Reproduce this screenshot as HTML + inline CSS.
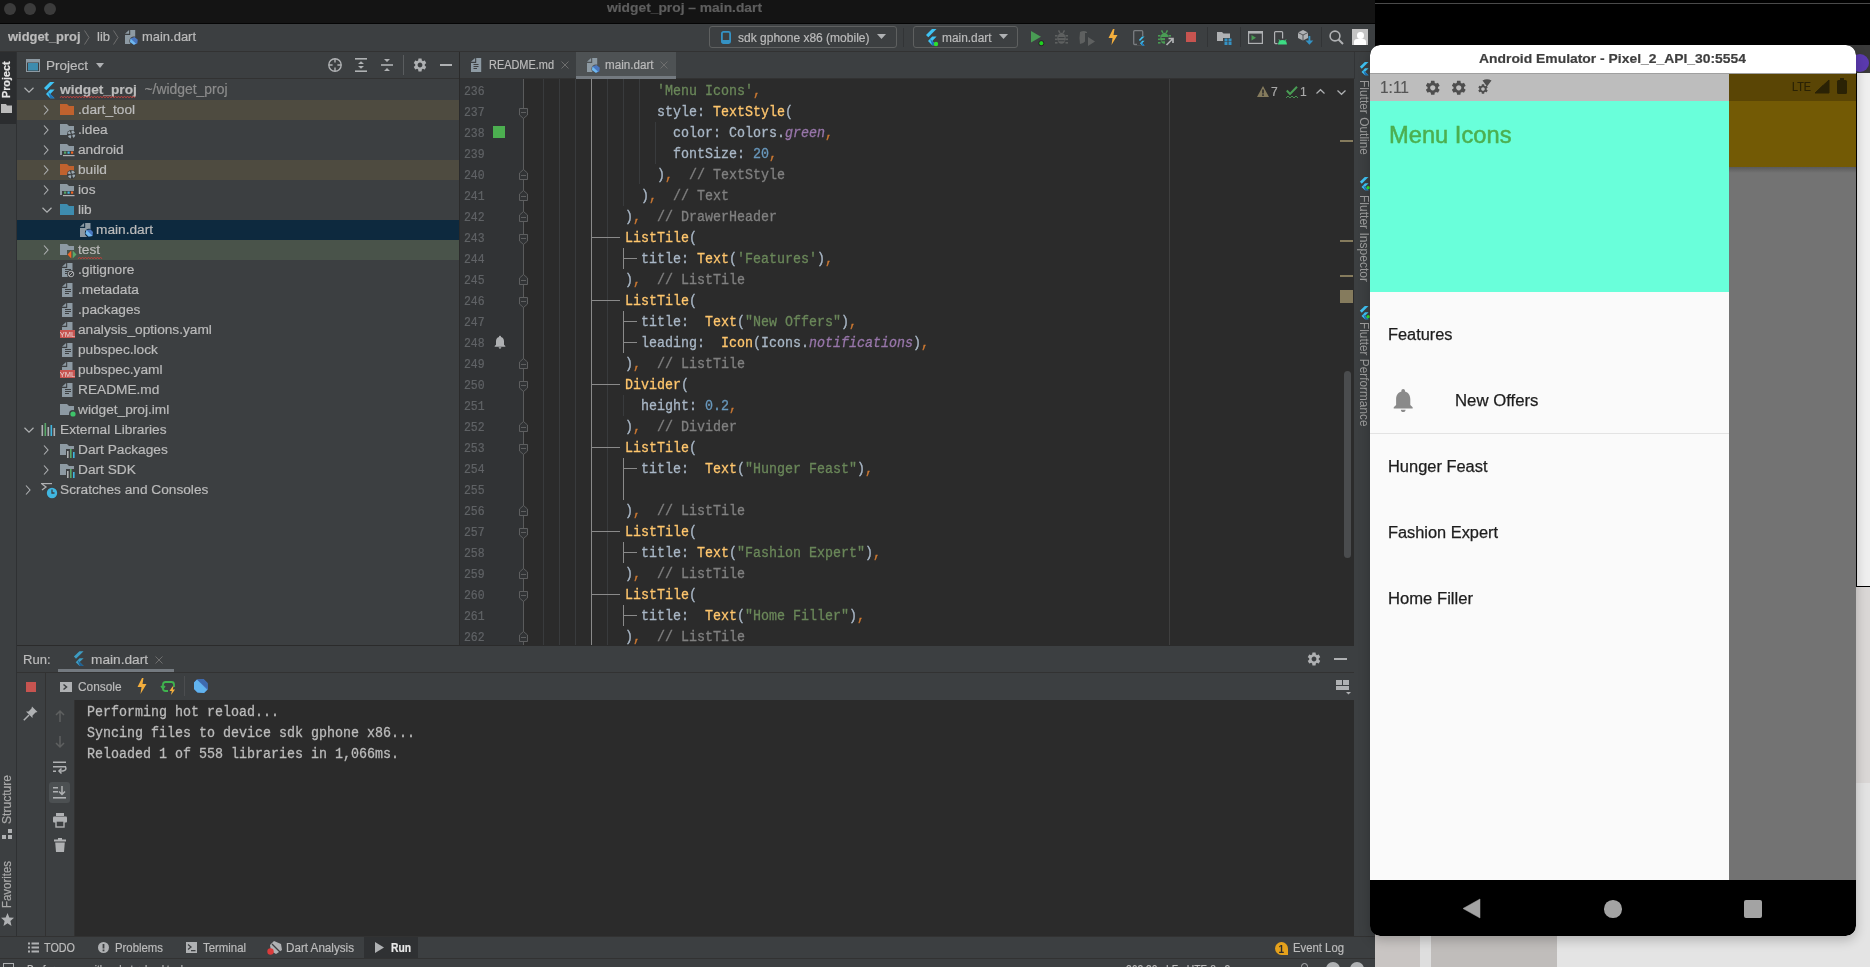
<!DOCTYPE html>
<html><head><meta charset="utf-8">
<style>
*{margin:0;padding:0;box-sizing:border-box}
html,body{width:1870px;height:967px;overflow:hidden;background:#000;font-family:"Liberation Sans",sans-serif;}
.a{position:absolute}
.t{position:absolute;white-space:pre;line-height:1;-webkit-text-stroke-width:0.2px}
.ui{font-size:13.6px;color:#BBBBBB}
.mono{font-family:"Liberation Mono",monospace}
svg{position:absolute;overflow:visible}
</style></head><body>
<div class="a" style="left:0;top:0;width:1375px;height:967px;background:#3C3F41;overflow:hidden;will-change:transform" id="ide">
  <!-- title bar -->
  <div class="a" style="left:0;top:0;width:1375px;height:23px;background:#141414"></div>
  <div class="a" style="left:0;top:23px;width:1375px;height:1px;background:#050505"></div>
  <div class="a" style="left:4px;top:3px;width:12px;height:12px;border-radius:50%;background:#3B3B3B"></div>
  <div class="a" style="left:24px;top:3px;width:12px;height:12px;border-radius:50%;background:#3B3B3B"></div>
  <div class="a" style="left:44px;top:3px;width:12px;height:12px;border-radius:50%;background:#3B3B3B"></div>
  

  <!-- nav bar -->
  <div class="a" style="left:0;top:24px;width:1375px;height:27px;background:#3C3F41"></div>
  <div class="a" style="left:0;top:51px;width:1375px;height:1px;background:#323232"></div>
  <!-- left stripe -->
  <div class="a" style="left:0;top:52px;width:16px;height:885px;background:#3C3F41"></div>
  <div class="a" style="left:16px;top:52px;width:1px;height:885px;background:#2F3133"></div>
  <!-- project header -->
  <div class="a" style="left:17px;top:52px;width:442px;height:26px;background:#3C3F41"></div>
  <div class="a" style="left:17px;top:78px;width:442px;height:1px;background:#323232"></div>
  <!-- tree -->
  <div class="a" style="left:17px;top:79px;width:442px;height:566px;background:#3C3F41" id="tree"></div>
  <div class="a" style="left:459px;top:52px;width:1px;height:594px;background:#2B2B2B"></div>
  <!-- editor -->
  <div class="a" style="left:460px;top:52px;width:894px;height:26px;background:#3C3F41" id="tabs"></div>
  <div class="a" style="left:460px;top:78px;width:894px;height:1px;background:#323232"></div>
  <div class="a" style="left:460px;top:79px;width:64px;height:566px;background:#313335" id="gutter"></div>
  <div class="a" style="left:524px;top:79px;width:830px;height:566px;background:#2B2B2B" id="code"></div>
  <!-- right stripe -->
  <div class="a" style="left:1354px;top:52px;width:21px;height:885px;background:#3C3F41"></div>
  <div class="a" style="left:1354px;top:52px;width:1px;height:27px;background:#323436"></div>
  <!-- run panel -->
  <div class="a" style="left:17px;top:645px;width:1337px;height:1px;background:#2B2B2B"></div>
  <div class="a" style="left:17px;top:646px;width:1337px;height:26px;background:#3C3F41"></div>
  <div class="a" style="left:17px;top:672px;width:1337px;height:1px;background:#323232"></div>
  <div class="a" style="left:17px;top:673px;width:1337px;height:27px;background:#3C3F41"></div>
  <div class="a" style="left:75px;top:700px;width:1279px;height:237px;background:#2B2B2B"></div>
  <div class="a" style="left:45px;top:673px;width:1px;height:264px;background:#323232"></div>
  <div class="a" style="left:74px;top:700px;width:1px;height:237px;background:#323232"></div>
  <!-- bottom bar -->
  <div class="a" style="left:0;top:936px;width:1375px;height:1px;background:#323232"></div>
  <div class="a" style="left:0;top:937px;width:1375px;height:22px;background:#3C3F41"></div>
  <div class="a" style="left:0;top:958px;width:1375px;height:1px;background:#323232"></div>
  <div class="a" style="left:0;top:959px;width:1375px;height:8px;background:#3C3F41"></div>
<div class="t" style="left:607.40px;top:1.47px;font-size:13.5px;color:#5E5E5E;font-weight:bold;transform:scaleX(1.0229);transform-origin:0 0;">widget_proj – main.dart</div>
<div class="t" style="left:8.30px;top:29.60px;font-size:13px;color:#BBBBBB;font-weight:bold;transform:scaleX(0.9939);transform-origin:0 0;">widget_proj</div>
<svg style="left:84px;top:30px" width="6" height="15" viewBox="0 0 6 15"><path d="M0.5 0.5 L5 7.5 L0.5 14.5" fill="none" stroke="#6E6E6E" stroke-width="1"/></svg>
<div class="t" style="left:96.50px;top:29.60px;font-size:13px;color:#BBBBBB;transform:scaleX(0.9995);transform-origin:0 0;">lib</div>
<svg style="left:113px;top:30px" width="6" height="15" viewBox="0 0 6 15"><path d="M0.5 0.5 L5 7.5 L0.5 14.5" fill="none" stroke="#6E6E6E" stroke-width="1"/></svg>
<svg style="left:125px;top:30px" width="13" height="15" viewBox="0 0 13 15"><path d="M5.2 0 H10.2 V14 H0 V5 H5.2 Z" fill="#8D9AA3"/><path d="M0 3.8 L4.1 0 V3.8 Z" fill="#8D9AA3"/><circle cx="9" cy="11" r="4.6" fill="#3C3F41"/><path d="M5.5 8.5 L9.5 7 L12.8 9.8 L12.3 13.5 L8.8 14.8 L5 12 Z" fill="#4A77C0"/><path d="M5.5 8.5 L11 13.8 L8.8 14.8 L5 12 Z" fill="#70B9EF"/></svg>
<div class="t" style="left:141.50px;top:29.60px;font-size:13px;color:#BBBBBB;transform:scaleX(0.9965);transform-origin:0 0;">main.dart</div>
<div class="a" style="left:709px;top:26px;width:188px;height:22px;border:1px solid #5E6060;border-radius:3px"></div>
<svg style="left:721px;top:31px" width="10" height="13" viewBox="0 0 10 13"><rect x="0.9" y="0.9" width="8.2" height="11.2" rx="1.5" fill="none" stroke="#3592C4" stroke-width="1.8"/><rect x="0.9" y="9" width="8.2" height="3" fill="#3592C4"/></svg>
<div class="t" style="left:738.00px;top:31.62px;font-size:12.5px;color:#BBBBBB;transform:scaleX(0.9606);transform-origin:0 0;">sdk gphone x86 (mobile)</div>
<svg style="left:877px;top:34px" width="9" height="5" viewBox="0 0 9 5"><path d="M0 0 H9 L4.5 5 Z" fill="#AFB1B3"/></svg>
<div class="a" style="left:903px;top:28px;width:1px;height:19px;background:#323436;"></div>
<div class="a" style="left:913px;top:26px;width:105px;height:22px;border:1px solid #5E6060;border-radius:3px"></div>
<svg style="left:925px;top:28.5px" width="12.0" height="17.0" viewBox="0 0 12.0 17.0"><g transform="scale(1.0)"><path d="M7 0 H11.5 L3.3 8.2 L1 5.9 Z" fill="#3FC3F4"/><path d="M7.2 7.6 H11.6 L7.3 11.9 L11.6 16.2 H7.2 L3 12 Z" fill="#3FC3F4"/><path d="M5.1 9.9 L7.3 12 L11.6 16.2 H7.2 Z" fill="#1F72B8"/></g><circle cx="11.0" cy="15.0" r="2.2" fill="#2EE02E"/></svg>
<div class="t" style="left:942.00px;top:31.62px;font-size:12.5px;color:#BBBBBB;transform:scaleX(0.9500);transform-origin:0 0;">main.dart</div>
<svg style="left:999px;top:34px" width="9" height="5" viewBox="0 0 9 5"><path d="M0 0 H9 L4.5 5 Z" fill="#AFB1B3"/></svg>
<svg style="left:1031px;top:31px" width="12" height="14" viewBox="0 0 12 14"><path d="M0 0 L10 5.8 L0 11.6 Z" fill="#499C54"/><circle cx="10.3" cy="12.2" r="2.1" fill="#1FD21F"/><circle cx="10.3" cy="12.2" r="2.6" fill="none" stroke="#1a1a1a" stroke-width="0.6"/></svg>
<svg style="left:1055px;top:30px" width="13" height="14" viewBox="0 0 13 14"><ellipse cx="6.5" cy="8.3" rx="4.2" ry="5.5" fill="#5E6060"/><rect x="0" y="5" width="2.5" height="1.6" fill="#5E6060"/><rect x="10.5" y="5" width="2.5" height="1.6" fill="#5E6060"/><rect x="0" y="8.5" width="2.5" height="1.6" fill="#5E6060"/><rect x="10.5" y="8.5" width="2.5" height="1.6" fill="#5E6060"/><rect x="0" y="12" width="2.5" height="1.6" fill="#5E6060"/><rect x="10.5" y="12" width="2.5" height="1.6" fill="#5E6060"/><path d="M3.5 0.3 L5 3 M9.5 0.3 L8 3" stroke="#5E6060" stroke-width="1.5"/><rect x="3.5" y="7" width="6" height="1.1" fill="#3C3F41"/><rect x="3.5" y="10.2" width="6" height="1.1" fill="#3C3F41"/></svg>
<svg style="left:1080px;top:31px" width="16" height="15" viewBox="0 0 16 15"><path d="M0 1 Q4 -1 7 1 L7 9 Q4 12 0 13 Q-1 6 0 1 Z" fill="#5E6060"/><rect x="5" y="2" width="3" height="10" fill="#3C3F41"/><path d="M8 6 L15 10.5 L8 15 Z" fill="#5E6060"/></svg>
<svg style="left:1108px;top:29px" width="10" height="16" viewBox="0 0 10 16"><path d="M5 0 L0.5 9 H4.5 L3.5 16 L9.5 6 H5.5 L6.5 0 Z" fill="#F4AF3D"/></svg>
<svg style="left:1133px;top:30px" width="12" height="16" viewBox="0 0 12 16"><rect x="0.7" y="0.7" width="9" height="13.8" rx="1" fill="none" stroke="#7A7D80" stroke-width="1.3"/><rect x="4" y="6" width="8" height="9" fill="#3C3F41"/><path d="M9 6.5 H11.5 L7 11 L5.9 9.9 Z" fill="#3FC3F4"/><path d="M9.2 10.8 H11.6 L9.3 13.1 L11.6 15.4 H9.2 L7 13.2 Z" fill="#3FC3F4"/><path d="M8.1 12.3 L9.3 13.1 L11.6 15.4 H9.2 Z" fill="#1F72B8"/></svg>
<svg style="left:1158px;top:30px" width="13" height="14" viewBox="0 0 13 14"><ellipse cx="6.5" cy="8.3" rx="4.2" ry="5.5" fill="#499C54"/><rect x="0" y="5" width="2.5" height="1.6" fill="#499C54"/><rect x="10.5" y="5" width="2.5" height="1.6" fill="#499C54"/><rect x="0" y="8.5" width="2.5" height="1.6" fill="#499C54"/><rect x="10.5" y="8.5" width="2.5" height="1.6" fill="#499C54"/><rect x="0" y="12" width="2.5" height="1.6" fill="#499C54"/><rect x="10.5" y="12" width="2.5" height="1.6" fill="#499C54"/><path d="M3.5 0.3 L5 3 M9.5 0.3 L8 3" stroke="#499C54" stroke-width="1.5"/><rect x="3.5" y="7" width="6" height="1.1" fill="#3C3F41"/><rect x="3.5" y="10.2" width="6" height="1.1" fill="#3C3F41"/></svg>
<svg style="left:1165px;top:37px" width="9" height="9" viewBox="0 0 9 9"><rect x="0" y="0" width="9" height="9" fill="#3C3F41"/><path d="M1.5 8 L7.5 2 M3.5 1.5 H8 V6" fill="none" stroke="#AFB1B3" stroke-width="1.7"/></svg>
<div class="a" style="left:1186px;top:32px;width:10px;height:10px;background:#C75450;"></div>
<div class="a" style="left:1207px;top:27px;width:1px;height:20px;background:#323436;"></div>
<svg style="left:1217px;top:32px" width="15" height="13" viewBox="0 0 15 13"><path d="M0 0 H5 L6.5 1.5 H13 V9 H0 Z" fill="#AFB1B3"/><rect x="6" y="6" width="9" height="7" fill="#3C3F41"/><rect x="7.5" y="6.5" width="3" height="3" fill="#3592C4"/><rect x="11.5" y="6.5" width="3" height="3" fill="#3592C4"/><rect x="7.5" y="10" width="3" height="3" fill="#3592C4"/><rect x="11.5" y="10" width="3" height="3" fill="#3592C4"/></svg>
<div class="a" style="left:1240px;top:27px;width:1px;height:20px;background:#323436;"></div>
<svg style="left:1248px;top:31px" width="15" height="13" viewBox="0 0 15 13"><rect x="0.6" y="0.6" width="13.8" height="11.8" fill="none" stroke="#AFB1B3" stroke-width="1.2"/><rect x="0.6" y="0.6" width="13.8" height="2" fill="#AFB1B3"/><path d="M3.5 4 L8 6.8 L3.5 9.6 Z" fill="#499C54"/></svg>
<svg style="left:1274px;top:31px" width="13" height="14" viewBox="0 0 13 14"><rect x="0.6" y="0.6" width="8" height="12" rx="1" fill="none" stroke="#AFB1B3" stroke-width="1.2"/><rect x="3.5" y="7.5" width="10" height="7" fill="#3C3F41"/><path d="M4 13.5 A4.5 4.5 0 0 1 13 13.5 Z" fill="#3DDC84"/><path d="M5 8.5 L6 10 M12 8.5 L11 10" stroke="#3DDC84" stroke-width="0.9"/></svg>
<svg style="left:1298px;top:30px" width="16" height="16" viewBox="0 0 16 16"><path d="M5 0 L10 2.5 V8 L5 10.5 L0 8 V2.5 Z" fill="#AFB1B3"/><path d="M0 2.5 L5 5 L10 2.5 M5 5 V10.5" fill="none" stroke="#3C3F41" stroke-width="0.8"/><rect x="10.5" y="6" width="1.8" height="6" fill="#3592C4"/><path d="M7.5 10.5 H15.3 L11.4 14.8 Z" fill="#3592C4"/></svg>
<div class="a" style="left:1321px;top:27px;width:1px;height:20px;background:#323436;"></div>
<svg style="left:1329px;top:30px" width="15" height="15" viewBox="0 0 15 15"><circle cx="6" cy="6" r="4.9" fill="none" stroke="#AFB1B3" stroke-width="1.6"/><path d="M9.5 9.5 L14 14" stroke="#AFB1B3" stroke-width="1.9"/></svg>
<div class="a" style="left:1352px;top:29px;width:16px;height:16px;background:#C4C4C4;overflow:hidden"><div class="a" style="left:4.5px;top:2.5px;width:7px;height:7.5px;border-radius:50%;background:#FFFFFF"></div><div class="a" style="left:2px;top:10px;width:12px;height:8px;border-radius:3px 3px 0 0;background:#FFFFFF"></div></div>
<svg style="left:26px;top:59px" width="14" height="14" viewBox="0 0 14 14"><rect x="0.5" y="0.5" width="13" height="12" fill="none" stroke="#8D9AA3" stroke-width="1"/><rect x="0.5" y="0.5" width="13" height="3" fill="#8D9AA3"/><rect x="2" y="4" width="10" height="7.5" fill="#3E8CAE"/></svg>
<div class="t" style="left:45.50px;top:58.74px;font-size:13.3px;color:#BBBBBB;transform:scaleX(1.0146);transform-origin:0 0;">Project</div>
<svg style="left:96px;top:63px" width="8" height="5" viewBox="0 0 8 5"><path d="M0 0 H8 L4 5 Z" fill="#AFB1B3"/></svg>
<svg style="left:328px;top:58px" width="14" height="14" viewBox="0 0 14 14"><circle cx="7" cy="7" r="6.2" fill="none" stroke="#AFB1B3" stroke-width="1.4"/><path d="M7 0.8 V4.6 M7 9.4 V13.2 M0.8 7 H4.6 M9.4 7 H13.2" stroke="#AFB1B3" stroke-width="1.4"/></svg>
<svg style="left:355px;top:58px" width="12" height="14" viewBox="0 0 12 14"><rect x="0" y="0" width="12" height="1.6" fill="#AFB1B3"/><rect x="0" y="12.4" width="12" height="1.6" fill="#AFB1B3"/><path d="M3 6 L6 3.2 L9 6 Z M3 8 L6 10.8 L9 8 Z" fill="#AFB1B3"/></svg>
<svg style="left:381px;top:59px" width="12" height="12" viewBox="0 0 12 12"><rect x="0" y="5.2" width="12" height="1.6" fill="#AFB1B3"/><path d="M3 0 H9 L6 3 Z M3 12 H9 L6 9 Z" fill="#AFB1B3"/></svg>
<div class="a" style="left:403px;top:55px;width:1px;height:20px;background:#5A5D5F;"></div>
<svg style="left:412px;top:57px" width="16" height="16" viewBox="0 0 24 24"><path fill="#AFB1B3" d="M19.14,12.94c0.04-0.3,0.06-0.61,0.06-0.94c0-0.32-0.02-0.64-0.07-0.94l2.03-1.58c0.18-0.14,0.23-0.41,0.12-0.61l-1.92-3.32c-0.12-0.22-0.37-0.29-0.59-0.22l-2.39,0.96c-0.5-0.38-1.03-0.7-1.62-0.94L14.4,2.81c-0.04-0.24-0.24-0.41-0.48-0.41h-3.84c-0.24,0-0.43,0.17-0.47,0.41L9.25,5.35C8.66,5.59,8.12,5.92,7.63,6.29L5.24,5.33c-0.22-0.08-0.47,0-0.59,0.22L2.74,8.87C2.62,9.08,2.66,9.34,2.86,9.48l2.03,1.58C4.84,11.36,4.8,11.69,4.8,12s0.02,0.64,0.07,0.94l-2.03,1.58c-0.18,0.14-0.23,0.41-0.12,0.61l1.92,3.32c0.12,0.22,0.37,0.29,0.59,0.22l2.39-0.96c0.5,0.38,1.03,0.7,1.62,0.94l0.36,2.54c0.05,0.24,0.24,0.41,0.48,0.41h3.84c0.24,0,0.44-0.17,0.47-0.41l0.36-2.54c0.59-0.24,1.13-0.56,1.62-0.94l2.39,0.96c0.22,0.08,0.47,0,0.59-0.22l1.92-3.32c0.12-0.22,0.07-0.47-0.12-0.61L19.14,12.94z M12,15.6c-1.98,0-3.6-1.62-3.6-3.6s1.62-3.6,3.6-3.6s3.6,1.62,3.6,3.6S13.98,15.6,12,15.6z"/></svg>
<div class="a" style="left:440px;top:64px;width:12px;height:1.6px;background:#AFB1B3;"></div>
<svg style="left:471px;top:58px" width="11" height="15" viewBox="0 0 11 15"><path d="M5.2 0 H10.2 V14 H0 V5 H5.2 Z" fill="#8D9AA3"/><path d="M0 3.8 L4.1 0 V3.8 Z" fill="#8D9AA3"/><rect x="2.5" y="6" width="5" height="1" fill="#3C3F41"/><rect x="2.5" y="8" width="5" height="1" fill="#3C3F41"/><rect x="2.5" y="10" width="3.5" height="1" fill="#3C3F41"/></svg>
<div class="t" style="left:488.50px;top:58.64px;font-size:12px;color:#BBBBBB;transform:scaleX(0.9110);transform-origin:0 0;">README.md</div>
<svg style="left:561px;top:61px" width="8" height="8" viewBox="0 0 8 8"><path d="M0.5 0.5 L7.5 7.5 M7.5 0.5 L0.5 7.5" stroke="#6E6E6E" stroke-width="1"/></svg>
<div class="a" style="left:576px;top:52px;width:100px;height:24px;background:#4E5254;"></div>
<div class="a" style="left:576px;top:76px;width:100px;height:3px;background:#747A80;"></div>
<svg style="left:587px;top:58px" width="13" height="15" viewBox="0 0 13 15"><path d="M5.2 0 H10.2 V14 H0 V5 H5.2 Z" fill="#8D9AA3"/><path d="M0 3.8 L4.1 0 V3.8 Z" fill="#8D9AA3"/><circle cx="9" cy="11" r="4.6" fill="#4E5254"/><path d="M5.5 8.5 L9.5 7 L12.8 9.8 L12.3 13.5 L8.8 14.8 L5 12 Z" fill="#4A77C0"/><path d="M5.5 8.5 L11 13.8 L8.8 14.8 L5 12 Z" fill="#70B9EF"/></svg>
<div class="t" style="left:604.50px;top:58.64px;font-size:12px;color:#BBBBBB;transform:scaleX(0.9696);transform-origin:0 0;">main.dart</div>
<svg style="left:660px;top:61px" width="8" height="8" viewBox="0 0 8 8"><path d="M0.5 0.5 L7.5 7.5 M7.5 0.5 L0.5 7.5" stroke="#6E6E6E" stroke-width="1"/></svg>
<div class="a" style="left:0px;top:52px;width:16px;height:72px;background:#2B2D2F;"></div>
<div class="t" style="left:1.2px;top:97.5px;font-size:11.3px;color:#E6E6E6;transform-origin:0 0;transform:rotate(-90deg) scaleX(0.9528);font-weight:bold;">Project</div>
<svg style="left:1px;top:104px" width="12" height="9" viewBox="0 0 12 9"><path d="M0 0 H5 L6 1.5 H11 V9 H0 Z" fill="#BBBBBB"/></svg>
<div class="t" style="left:0.6px;top:824px;font-size:12px;color:#A9A9A9;transform-origin:0 0;transform:rotate(-90deg) scaleX(1.0064);">Structure</div>
<svg style="left:2px;top:829px" width="11" height="11" viewBox="0 0 11 11"><rect x="0" y="6" width="4" height="4" fill="#AFB1B3"/><rect x="6" y="6" width="4" height="4" fill="#AFB1B3"/><rect x="6" y="0" width="4" height="4" fill="#AFB1B3"/></svg>
<div class="t" style="left:0.6px;top:908px;font-size:12px;color:#A9A9A9;transform-origin:0 0;transform:rotate(-90deg) scaleX(0.9524);">Favorites</div>
<svg style="left:1px;top:913px" width="13" height="13" viewBox="0 0 13 13"><path d="M6.5 0 L8.3 4.5 L13 4.8 L9.4 8 L10.5 13 L6.5 10.3 L2.5 13 L3.6 8 L0 4.8 L4.7 4.5 Z" fill="#AFB1B3"/></svg>
<svg style="left:1359px;top:62px" width="10" height="14" viewBox="0 0 12 17"><path d="M7 0 H11.5 L3.3 8.2 L1 5.9 Z" fill="#3FC3F4"/><path d="M7.2 7.6 H11.6 L7.3 11.9 L11.6 16.2 H7.2 L3 12 Z" fill="#3FC3F4"/><path d="M5.1 9.9 L7.3 12 L11.6 16.2 H7.2 Z" fill="#1F72B8"/></svg>
<div class="t" style="left:1369.6px;top:79.8px;font-size:12px;color:#9E9E9E;transform-origin:0 0;transform:rotate(90deg) scaleX(0.9952);-webkit-text-stroke-width:0;">Flutter Outline</div>
<svg style="left:1359px;top:177px" width="10" height="14" viewBox="0 0 12 17"><path d="M7 0 H11.5 L3.3 8.2 L1 5.9 Z" fill="#3FC3F4"/><path d="M7.2 7.6 H11.6 L7.3 11.9 L11.6 16.2 H7.2 L3 12 Z" fill="#3FC3F4"/><path d="M5.1 9.9 L7.3 12 L11.6 16.2 H7.2 Z" fill="#1F72B8"/><circle cx="11" cy="13" r="2" fill="#2EE02E"/></svg>
<div class="t" style="left:1369.6px;top:194.6px;font-size:12px;color:#9E9E9E;transform-origin:0 0;transform:rotate(90deg) scaleX(1.0034);-webkit-text-stroke-width:0;">Flutter Inspector</div>
<svg style="left:1359px;top:306px" width="10" height="14" viewBox="0 0 12 17"><path d="M7 0 H11.5 L3.3 8.2 L1 5.9 Z" fill="#3FC3F4"/><path d="M7.2 7.6 H11.6 L7.3 11.9 L11.6 16.2 H7.2 L3 12 Z" fill="#3FC3F4"/><path d="M5.1 9.9 L7.3 12 L11.6 16.2 H7.2 Z" fill="#1F72B8"/><circle cx="11" cy="13" r="2" fill="#2EE02E"/></svg>
<div class="t" style="left:1369.6px;top:321.5px;font-size:12px;color:#9E9E9E;transform-origin:0 0;transform:rotate(90deg) scaleX(0.9855);-webkit-text-stroke-width:0;">Flutter Performance</div>
<div class="a" style="left:17px;top:100px;width:442px;height:20px;background:#4E4B40;"></div>
<div class="a" style="left:17px;top:160px;width:442px;height:20px;background:#4E4B40;"></div>
<div class="a" style="left:17px;top:220px;width:442px;height:20px;background:#0D293E;"></div>
<div class="a" style="left:17px;top:240px;width:442px;height:20px;background:#49534A;"></div>
<svg style="left:24px;top:87px" width="10" height="6" viewBox="0 0 10 6"><path d="M0.5 0.8 L5 5.2 L9.5 0.8" fill="none" stroke="#AFB1B3" stroke-width="1.2"/></svg>
<svg style="left:43px;top:82px" width="12" height="17" viewBox="0 0 12 17"><path d="M7 0 H11.5 L3.3 8.2 L1 5.9 Z" fill="#3FC3F4"/><path d="M7.2 7.6 H11.6 L7.3 11.9 L11.6 16.2 H7.2 L3 12 Z" fill="#3FC3F4"/><path d="M5.1 9.9 L7.3 12 L11.6 16.2 H7.2 Z" fill="#1F72B8"/></svg>
<div class="t" style="left:60px;top:83.2px;font-size:13.7px;color:#BBBBBB;font-weight:bold">widget_proj</div>
<svg style="left:60px;top:96px" width="77" height="3" viewBox="0 0 77 3"><path d="M0 2 L1.5 0 L3 2 L4.5 0 L6 2 L7.5 0 L9 2 L10.5 0 L12 2 L13.5 0 L15 2 L16.5 0 L18 2 L19.5 0 L21 2 L22.5 0 L24 2 L25.5 0 L27 2 L28.5 0 L30 2 L31.5 0 L33 2 L34.5 0 L36 2 L37.5 0 L39 2 L40.5 0 L42 2 L43.5 0 L45 2 L46.5 0 L48 2 L49.5 0 L51 2 L52.5 0 L54 2 L55.5 0 L57 2 L58.5 0 L60 2 L61.5 0 L63 2 L64.5 0 L66 2 L67.5 0 L69 2 L70.5 0 L72 2 L73.5 0 L75 2" fill="none" stroke="#BC3F3C" stroke-width="0.9"/></svg>
<div class="t" style="left:144.5px;top:83.2px;font-size:13.9px;color:#8C8C8C;">~/widget_proj</div>
<svg style="left:43.4px;top:105px" width="6" height="10" viewBox="0 0 6 10"><path d="M1 0.5 L5 5 L1 9.5" fill="none" stroke="#AFB1B3" stroke-width="1.1"/></svg>
<svg style="left:60px;top:104px" width="14" height="11" viewBox="0 0 14 11"><path d="M0 0 H7 L9 2 H14 V11 H0 Z" fill="#C0622E"/></svg>
<div class="t" style="left:78px;top:103.4px;font-size:13.7px;color:#BBBBBB;">.dart_tool</div>
<svg style="left:43.4px;top:125px" width="6" height="10" viewBox="0 0 6 10"><path d="M1 0.5 L5 5 L1 9.5" fill="none" stroke="#AFB1B3" stroke-width="1.1"/></svg>
<svg style="left:60px;top:124px" width="14" height="11" viewBox="0 0 14 11"><path d="M0 0 H7 L9 2 H14 V11 H0 Z" fill="#8D9AA3"/></svg>
<svg style="left:67px;top:130px" width="9" height="9" viewBox="0 0 9 9"><circle cx="4.5" cy="4.5" r="4.5" fill="#3C3F41"/><g fill="#9AA7B0"><path d="M4.5 4.5 L4.5 0.5 A4 4 0 0 1 8 2.5 Z"/><path d="M4.5 4.5 L8.3 4.8 A4 4 0 0 1 6.5 8 Z"/><path d="M4.5 4.5 L3.8 8.4 A4 4 0 0 1 0.8 6 Z"/><path d="M4.5 4.5 L0.6 3.5 A4 4 0 0 1 2.5 1 Z"/></g><circle cx="4.5" cy="4.5" r="1.2" fill="#3C3F41"/></svg>
<div class="t" style="left:78px;top:123.4px;font-size:13.7px;color:#BBBBBB;">.idea</div>
<svg style="left:43.4px;top:145px" width="6" height="10" viewBox="0 0 6 10"><path d="M1 0.5 L5 5 L1 9.5" fill="none" stroke="#AFB1B3" stroke-width="1.1"/></svg>
<svg style="left:60px;top:144px" width="14" height="11" viewBox="0 0 14 11"><path d="M0 0 H7 L9 2 H14 V11 H0 Z" fill="#8D9AA3"/></svg>
<svg style="left:62px;top:151px" width="14" height="6" viewBox="0 0 14 6"><rect x="0" y="0" width="13" height="6" fill="#3C3F41"/><rect x="2" y="0.5" width="2.2" height="2.2" fill="#59A869"/><rect x="5.5" y="0.5" width="2.2" height="2.2" fill="#40B6E0"/><rect x="9" y="0.5" width="2.2" height="2.2" fill="#F26522"/><rect x="1" y="4" width="11.5" height="1.2" fill="#AFB1B3"/></svg>
<div class="t" style="left:78px;top:143.4px;font-size:13.7px;color:#BBBBBB;">android</div>
<svg style="left:43.4px;top:165px" width="6" height="10" viewBox="0 0 6 10"><path d="M1 0.5 L5 5 L1 9.5" fill="none" stroke="#AFB1B3" stroke-width="1.1"/></svg>
<svg style="left:60px;top:164px" width="14" height="11" viewBox="0 0 14 11"><path d="M0 0 H7 L9 2 H14 V11 H0 Z" fill="#C0622E"/></svg>
<svg style="left:67px;top:170px" width="9" height="9" viewBox="0 0 9 9"><circle cx="4.5" cy="4.5" r="4.5" fill="#3C3F41"/><g fill="#9AA7B0"><path d="M4.5 4.5 L4.5 0.5 A4 4 0 0 1 8 2.5 Z"/><path d="M4.5 4.5 L8.3 4.8 A4 4 0 0 1 6.5 8 Z"/><path d="M4.5 4.5 L3.8 8.4 A4 4 0 0 1 0.8 6 Z"/><path d="M4.5 4.5 L0.6 3.5 A4 4 0 0 1 2.5 1 Z"/></g><circle cx="4.5" cy="4.5" r="1.2" fill="#3C3F41"/></svg>
<div class="t" style="left:78px;top:163.4px;font-size:13.7px;color:#BBBBBB;">build</div>
<svg style="left:43.4px;top:185px" width="6" height="10" viewBox="0 0 6 10"><path d="M1 0.5 L5 5 L1 9.5" fill="none" stroke="#AFB1B3" stroke-width="1.1"/></svg>
<svg style="left:60px;top:184px" width="14" height="11" viewBox="0 0 14 11"><path d="M0 0 H7 L9 2 H14 V11 H0 Z" fill="#8D9AA3"/></svg>
<svg style="left:62px;top:191px" width="14" height="6" viewBox="0 0 14 6"><rect x="0" y="0" width="13" height="6" fill="#3C3F41"/><rect x="2" y="0.5" width="2.2" height="2.2" fill="#59A869"/><rect x="5.5" y="0.5" width="2.2" height="2.2" fill="#40B6E0"/><rect x="9" y="0.5" width="2.2" height="2.2" fill="#F26522"/><rect x="1" y="4" width="11.5" height="1.2" fill="#AFB1B3"/></svg>
<div class="t" style="left:78px;top:183.4px;font-size:13.7px;color:#BBBBBB;">ios</div>
<svg style="left:42px;top:207px" width="10" height="6" viewBox="0 0 10 6"><path d="M0.5 0.8 L5 5.2 L9.5 0.8" fill="none" stroke="#AFB1B3" stroke-width="1.2"/></svg>
<svg style="left:60px;top:204px" width="14" height="11" viewBox="0 0 14 11"><path d="M0 0 H7 L9 2 H14 V11 H0 Z" fill="#3E8CAE"/></svg>
<div class="t" style="left:78px;top:203.4px;font-size:13.7px;color:#BBBBBB;">lib</div>
<svg style="left:80px;top:223px" width="12" height="14" viewBox="0 0 12 14"><path d="M5.2 0 H10.5 V14 H0 V5 H5.2 Z" fill="#8D9AA3"/><path d="M0 3.8 L4.1 0 V3.8 Z" fill="#8D9AA3"/></svg>
<svg style="left:85px;top:229px" width="8" height="8" viewBox="0 0 8 8"><circle cx="4" cy="4" r="4.2" fill="#0D293E"/><path d="M1.5 1 L5.5 0.5 L8 3 L7.5 7 L3.5 7.5 L0.5 4.5 Z" fill="#4A77C0"/><path d="M1.5 1 L6.5 6 L7.5 7 L3.5 7.5 L0.5 4.5 Z" fill="#70B9EF"/></svg>
<div class="t" style="left:96px;top:223.4px;font-size:13.7px;color:#BBBBBB;">main.dart</div>
<svg style="left:43.4px;top:245px" width="6" height="10" viewBox="0 0 6 10"><path d="M1 0.5 L5 5 L1 9.5" fill="none" stroke="#AFB1B3" stroke-width="1.1"/></svg>
<svg style="left:60px;top:244px" width="14" height="11" viewBox="0 0 14 11"><path d="M0 0 H7 L9 2 H14 V11 H0 Z" fill="#8D9AA3"/></svg>
<svg style="left:67px;top:250px" width="10" height="9" viewBox="0 0 10 9"><rect x="0" y="0" width="10" height="9" fill="#49534A"/><path d="M4.3 0.5 L0.5 4.5 L4.3 8.5 Z" fill="#F26522"/><path d="M5.7 0.5 L9.5 4.5 L5.7 8.5 Z" fill="#59A869"/></svg>
<div class="t" style="left:78px;top:243.4px;font-size:13.7px;color:#BBBBBB;">test</div>
<svg style="left:78px;top:257px" width="25" height="3" viewBox="0 0 25 3"><path d="M0 2 L1.5 0 L3 2 L4.5 0 L6 2 L7.5 0 L9 2 L10.5 0 L12 2 L13.5 0 L15 2 L16.5 0 L18 2 L19.5 0 L21 2 L22.5 0 L24 2" fill="none" stroke="#BC3F3C" stroke-width="0.9"/></svg>
<svg style="left:62px;top:263px" width="12" height="14" viewBox="0 0 12 14"><path d="M5.2 0 H10.5 V14 H0 V5 H5.2 Z" fill="#8D9AA3"/><path d="M0 3.8 L4.1 0 V3.8 Z" fill="#8D9AA3"/><rect x="3" y="6" width="6" height="1" fill="#3C3F41"/><rect x="3" y="8" width="6" height="1" fill="#3C3F41"/><rect x="3" y="10" width="4" height="1" fill="#3C3F41"/></svg>
<svg style="left:67px;top:270px" width="8" height="8" viewBox="0 0 8 8"><circle cx="4" cy="4" r="4" fill="#3C3F41"/><circle cx="4" cy="4" r="2.8" fill="none" stroke="#AFB1B3" stroke-width="1"/><path d="M2 6 L6 2" stroke="#AFB1B3" stroke-width="1"/></svg>
<div class="t" style="left:78px;top:263.4px;font-size:13.7px;color:#BBBBBB;">.gitignore</div>
<svg style="left:62px;top:283px" width="12" height="14" viewBox="0 0 12 14"><path d="M5.2 0 H10.5 V14 H0 V5 H5.2 Z" fill="#8D9AA3"/><path d="M0 3.8 L4.1 0 V3.8 Z" fill="#8D9AA3"/><rect x="3" y="6" width="6" height="1" fill="#3C3F41"/><rect x="3" y="8" width="6" height="1" fill="#3C3F41"/><rect x="3" y="10" width="4" height="1" fill="#3C3F41"/></svg>
<div class="t" style="left:78px;top:283.4px;font-size:13.7px;color:#BBBBBB;">.metadata</div>
<svg style="left:62px;top:303px" width="12" height="14" viewBox="0 0 12 14"><path d="M5.2 0 H10.5 V14 H0 V5 H5.2 Z" fill="#8D9AA3"/><path d="M0 3.8 L4.1 0 V3.8 Z" fill="#8D9AA3"/><rect x="3" y="6" width="6" height="1" fill="#3C3F41"/><rect x="3" y="8" width="6" height="1" fill="#3C3F41"/><rect x="3" y="10" width="4" height="1" fill="#3C3F41"/></svg>
<div class="t" style="left:78px;top:303.4px;font-size:13.7px;color:#BBBBBB;">.packages</div>
<svg style="left:62px;top:322px" width="12" height="9" viewBox="0 0 12 9"><path d="M5.2 0 H10.5 V9 H0 V5 H5.2 Z" fill="#8D9AA3"/><path d="M0 3.8 L4.1 0 V3.8 Z" fill="#8D9AA3"/></svg>
<svg style="left:60px;top:330px" width="15" height="8" viewBox="0 0 15 8"><rect x="0" y="0" width="15" height="8" fill="#C75450"/><text x="7.5" y="7" text-anchor="middle" font-family="Liberation Sans" font-size="7.5" fill="#E8D8D8">YML</text></svg>
<div class="t" style="left:78px;top:323.4px;font-size:13.7px;color:#BBBBBB;">analysis_options.yaml</div>
<svg style="left:62px;top:343px" width="12" height="14" viewBox="0 0 12 14"><path d="M5.2 0 H10.5 V14 H0 V5 H5.2 Z" fill="#8D9AA3"/><path d="M0 3.8 L4.1 0 V3.8 Z" fill="#8D9AA3"/><rect x="3" y="6" width="6" height="1" fill="#3C3F41"/><rect x="3" y="8" width="6" height="1" fill="#3C3F41"/><rect x="3" y="10" width="4" height="1" fill="#3C3F41"/></svg>
<div class="t" style="left:78px;top:343.4px;font-size:13.7px;color:#BBBBBB;">pubspec.lock</div>
<svg style="left:62px;top:362px" width="12" height="9" viewBox="0 0 12 9"><path d="M5.2 0 H10.5 V9 H0 V5 H5.2 Z" fill="#8D9AA3"/><path d="M0 3.8 L4.1 0 V3.8 Z" fill="#8D9AA3"/></svg>
<svg style="left:60px;top:370px" width="15" height="8" viewBox="0 0 15 8"><rect x="0" y="0" width="15" height="8" fill="#C75450"/><text x="7.5" y="7" text-anchor="middle" font-family="Liberation Sans" font-size="7.5" fill="#E8D8D8">YML</text></svg>
<div class="t" style="left:78px;top:363.4px;font-size:13.7px;color:#BBBBBB;">pubspec.yaml</div>
<svg style="left:62px;top:383px" width="12" height="14" viewBox="0 0 12 14"><path d="M5.2 0 H10.5 V14 H0 V5 H5.2 Z" fill="#8D9AA3"/><path d="M0 3.8 L4.1 0 V3.8 Z" fill="#8D9AA3"/><rect x="3" y="6" width="6" height="1" fill="#3C3F41"/><rect x="3" y="8" width="6" height="1" fill="#3C3F41"/><rect x="3" y="10" width="4" height="1" fill="#3C3F41"/></svg>
<div class="t" style="left:78px;top:383.4px;font-size:13.7px;color:#BBBBBB;">README.md</div>
<svg style="left:60px;top:404px" width="14" height="11" viewBox="0 0 14 11"><path d="M0 0 H7 L9 2 H14 V11 H0 Z" fill="#8D9AA3"/></svg>
<svg style="left:69px;top:410px" width="8" height="8" viewBox="0 0 8 8"><circle cx="4" cy="4" r="4" fill="#3C3F41"/><circle cx="4" cy="4" r="2.6" fill="#3EC46A"/></svg>
<div class="t" style="left:78px;top:403.4px;font-size:13.7px;color:#BBBBBB;">widget_proj.iml</div>
<svg style="left:24px;top:427px" width="10" height="6" viewBox="0 0 10 6"><path d="M0.5 0.8 L5 5.2 L9.5 0.8" fill="none" stroke="#AFB1B3" stroke-width="1.2"/></svg>
<svg style="left:41px;top:423px" width="16" height="14" viewBox="0 0 16 14"><rect x="0.5" y="2" width="1.6" height="11" fill="#AFB1B3"/><rect x="3.5" y="0" width="1.6" height="13" fill="#59A869"/><rect x="6.5" y="4" width="1.6" height="9" fill="#AFB1B3"/><rect x="9.5" y="2" width="1.6" height="11" fill="#40B6E0"/><rect x="12.5" y="5" width="1.6" height="8" fill="#AFB1B3"/></svg>
<div class="t" style="left:60px;top:423.4px;font-size:13.7px;color:#BBBBBB;">External Libraries</div>
<svg style="left:43.4px;top:445px" width="6" height="10" viewBox="0 0 6 10"><path d="M1 0.5 L5 5 L1 9.5" fill="none" stroke="#AFB1B3" stroke-width="1.1"/></svg>
<svg style="left:60px;top:444px" width="14" height="11" viewBox="0 0 14 11"><path d="M0 0 H7 L9 2 H14 V11 H0 Z" fill="#8D9AA3"/></svg>
<svg style="left:66px;top:449px" width="10" height="9" viewBox="0 0 10 9"><rect x="0" y="0" width="10" height="9" fill="#3C3F41"/><rect x="1" y="2" width="1.6" height="7" fill="#AFB1B3"/><rect x="4" y="0" width="1.6" height="9" fill="#59A869"/><rect x="7" y="3" width="1.6" height="6" fill="#40B6E0"/></svg>
<div class="t" style="left:78px;top:443.4px;font-size:13.7px;color:#BBBBBB;">Dart Packages</div>
<svg style="left:43.4px;top:465px" width="6" height="10" viewBox="0 0 6 10"><path d="M1 0.5 L5 5 L1 9.5" fill="none" stroke="#AFB1B3" stroke-width="1.1"/></svg>
<svg style="left:60px;top:464px" width="14" height="11" viewBox="0 0 14 11"><path d="M0 0 H7 L9 2 H14 V11 H0 Z" fill="#8D9AA3"/></svg>
<svg style="left:66px;top:469px" width="10" height="9" viewBox="0 0 10 9"><rect x="0" y="0" width="10" height="9" fill="#3C3F41"/><rect x="1" y="2" width="1.6" height="7" fill="#AFB1B3"/><rect x="4" y="0" width="1.6" height="9" fill="#59A869"/><rect x="7" y="3" width="1.6" height="6" fill="#40B6E0"/></svg>
<div class="t" style="left:78px;top:463.4px;font-size:13.7px;color:#BBBBBB;">Dart SDK</div>
<svg style="left:25.4px;top:485px" width="6" height="10" viewBox="0 0 6 10"><path d="M1 0.5 L5 5 L1 9.5" fill="none" stroke="#AFB1B3" stroke-width="1.1"/></svg>
<svg style="left:41px;top:483px" width="12" height="11" viewBox="0 0 12 11"><path d="M0 0 H12 V11 H0 Z" fill="#9AA7B0" opacity="0"/><path d="M1 1 L5 4 L1 7" fill="none" stroke="#AFB1B3" stroke-width="1.3"/><rect x="0" y="0" width="11" height="1.2" fill="#AFB1B3"/></svg>
<svg style="left:46px;top:487px" width="12" height="12" viewBox="0 0 12 12"><circle cx="6" cy="6" r="6" fill="#3C3F41"/><circle cx="6" cy="6" r="5.2" fill="#40B6E0"/><path d="M6 2.5 V6 H8.5" fill="none" stroke="#3C3F41" stroke-width="1.3"/></svg>
<div class="t" style="left:60px;top:483.4px;font-size:13.7px;color:#BBBBBB;">Scratches and Consoles</div>
<!--TABS-->
<div class="a" style="left:524px;top:79px;width:830px;height:566px;overflow:hidden">
<div class="a" style="left:645px;top:0px;width:1px;height:566px;background:#3F3F3F;"></div>
<div class="a" style="left:19px;top:0px;width:1px;height:566px;background:#393B3D;"></div>
<div class="a" style="left:35px;top:0px;width:1px;height:566px;background:#393B3D;"></div>
<div class="a" style="left:51px;top:0px;width:1px;height:566px;background:#393B3D;"></div>
<div class="a" style="left:83px;top:0px;width:1px;height:566px;background:#393B3D;"></div>
<div class="a" style="left:67px;top:0px;width:1px;height:566px;background:#8A8A8A;"></div>
<div class="a" style="left:99px;top:0px;width:1px;height:127px;background:#393B3D;"></div>
<div class="a" style="left:115px;top:0px;width:1px;height:105px;background:#393B3D;"></div>
<div class="a" style="left:131px;top:43px;width:1px;height:42px;background:#393B3D;"></div>
<div class="a" style="left:68px;top:158px;width:28px;height:1px;background:#8A8A8A;"></div>
<div class="a" style="left:68px;top:221px;width:28px;height:1px;background:#8A8A8A;"></div>
<div class="a" style="left:68px;top:305px;width:28px;height:1px;background:#8A8A8A;"></div>
<div class="a" style="left:68px;top:368px;width:28px;height:1px;background:#8A8A8A;"></div>
<div class="a" style="left:68px;top:452px;width:28px;height:1px;background:#8A8A8A;"></div>
<div class="a" style="left:68px;top:515px;width:28px;height:1px;background:#8A8A8A;"></div>
<div class="a" style="left:99px;top:168.5px;width:1px;height:21px;background:#8A8A8A;"></div>
<div class="a" style="left:100px;top:179px;width:13px;height:1px;background:#8A8A8A;"></div>
<div class="a" style="left:99px;top:231.5px;width:1px;height:42px;background:#8A8A8A;"></div>
<div class="a" style="left:100px;top:242px;width:13px;height:1px;background:#8A8A8A;"></div>
<div class="a" style="left:100px;top:263px;width:13px;height:1px;background:#8A8A8A;"></div>
<div class="a" style="left:99px;top:315.5px;width:1px;height:21px;background:#393B3D;"></div>
<div class="a" style="left:99px;top:378.5px;width:1px;height:42px;background:#8A8A8A;"></div>
<div class="a" style="left:100px;top:389px;width:13px;height:1px;background:#8A8A8A;"></div>
<div class="a" style="left:99px;top:462.5px;width:1px;height:21px;background:#8A8A8A;"></div>
<div class="a" style="left:100px;top:473px;width:13px;height:1px;background:#8A8A8A;"></div>
<div class="a" style="left:99px;top:525.5px;width:1px;height:21px;background:#8A8A8A;"></div>
<div class="a" style="left:100px;top:536px;width:13px;height:1px;background:#8A8A8A;"></div>
<div class="t" style="left:133.00px;top:5.49px;font-family:'Liberation Mono',monospace;font-size:14.5px;transform:scaleX(0.9195);transform-origin:0 0;-webkit-text-stroke-width:0.3px"><span style="color:#6A8759;">'Menu Icons'</span><span style="color:#CC7832;">,</span></div>
<div class="t" style="left:133.00px;top:26.49px;font-family:'Liberation Mono',monospace;font-size:14.5px;transform:scaleX(0.9195);transform-origin:0 0;-webkit-text-stroke-width:0.3px"><span style="color:#A9B7C6;">style: </span><span style="color:#FFC66D;">TextStyle</span><span style="color:#A9B7C6;">(</span></div>
<div class="t" style="left:149.00px;top:47.49px;font-family:'Liberation Mono',monospace;font-size:14.5px;transform:scaleX(0.9195);transform-origin:0 0;-webkit-text-stroke-width:0.3px"><span style="color:#A9B7C6;">color: Colors.</span><span style="color:#9876AA;font-style:italic;">green</span><span style="color:#CC7832;">,</span></div>
<div class="t" style="left:149.00px;top:68.49px;font-family:'Liberation Mono',monospace;font-size:14.5px;transform:scaleX(0.9195);transform-origin:0 0;-webkit-text-stroke-width:0.3px"><span style="color:#A9B7C6;">fontSize: </span><span style="color:#6897BB;">20</span><span style="color:#CC7832;">,</span></div>
<div class="t" style="left:133.00px;top:89.49px;font-family:'Liberation Mono',monospace;font-size:14.5px;transform:scaleX(0.9195);transform-origin:0 0;-webkit-text-stroke-width:0.3px"><span style="color:#A9B7C6;">)</span><span style="color:#CC7832;">,</span><span style="color:#808080;">  // TextStyle</span></div>
<div class="t" style="left:117.00px;top:110.49px;font-family:'Liberation Mono',monospace;font-size:14.5px;transform:scaleX(0.9195);transform-origin:0 0;-webkit-text-stroke-width:0.3px"><span style="color:#A9B7C6;">)</span><span style="color:#CC7832;">,</span><span style="color:#808080;">  // Text</span></div>
<div class="t" style="left:101.00px;top:131.49px;font-family:'Liberation Mono',monospace;font-size:14.5px;transform:scaleX(0.9195);transform-origin:0 0;-webkit-text-stroke-width:0.3px"><span style="color:#A9B7C6;">)</span><span style="color:#CC7832;">,</span><span style="color:#808080;">  // DrawerHeader</span></div>
<div class="t" style="left:101.00px;top:152.49px;font-family:'Liberation Mono',monospace;font-size:14.5px;transform:scaleX(0.9195);transform-origin:0 0;-webkit-text-stroke-width:0.3px"><span style="color:#FFC66D;">ListTile</span><span style="color:#A9B7C6;">(</span></div>
<div class="t" style="left:117.00px;top:173.49px;font-family:'Liberation Mono',monospace;font-size:14.5px;transform:scaleX(0.9195);transform-origin:0 0;-webkit-text-stroke-width:0.3px"><span style="color:#A9B7C6;">title: </span><span style="color:#FFC66D;">Text</span><span style="color:#A9B7C6;">(</span><span style="color:#6A8759;">'Features'</span><span style="color:#A9B7C6;">)</span><span style="color:#CC7832;">,</span></div>
<div class="t" style="left:101.00px;top:194.49px;font-family:'Liberation Mono',monospace;font-size:14.5px;transform:scaleX(0.9195);transform-origin:0 0;-webkit-text-stroke-width:0.3px"><span style="color:#A9B7C6;">)</span><span style="color:#CC7832;">,</span><span style="color:#808080;">  // ListTile</span></div>
<div class="t" style="left:101.00px;top:215.49px;font-family:'Liberation Mono',monospace;font-size:14.5px;transform:scaleX(0.9195);transform-origin:0 0;-webkit-text-stroke-width:0.3px"><span style="color:#FFC66D;">ListTile</span><span style="color:#A9B7C6;">(</span></div>
<div class="t" style="left:117.00px;top:236.49px;font-family:'Liberation Mono',monospace;font-size:14.5px;transform:scaleX(0.9195);transform-origin:0 0;-webkit-text-stroke-width:0.3px"><span style="color:#A9B7C6;">title:  </span><span style="color:#FFC66D;">Text</span><span style="color:#A9B7C6;">(</span><span style="color:#6A8759;">"New Offers"</span><span style="color:#A9B7C6;">)</span><span style="color:#CC7832;">,</span></div>
<div class="t" style="left:117.00px;top:257.49px;font-family:'Liberation Mono',monospace;font-size:14.5px;transform:scaleX(0.9195);transform-origin:0 0;-webkit-text-stroke-width:0.3px"><span style="color:#A9B7C6;">leading:  </span><span style="color:#FFC66D;">Icon</span><span style="color:#A9B7C6;">(Icons.</span><span style="color:#9876AA;font-style:italic;">notifications</span><span style="color:#A9B7C6;">)</span><span style="color:#CC7832;">,</span></div>
<div class="t" style="left:101.00px;top:278.49px;font-family:'Liberation Mono',monospace;font-size:14.5px;transform:scaleX(0.9195);transform-origin:0 0;-webkit-text-stroke-width:0.3px"><span style="color:#A9B7C6;">)</span><span style="color:#CC7832;">,</span><span style="color:#808080;">  // ListTile</span></div>
<div class="t" style="left:101.00px;top:299.49px;font-family:'Liberation Mono',monospace;font-size:14.5px;transform:scaleX(0.9195);transform-origin:0 0;-webkit-text-stroke-width:0.3px"><span style="color:#FFC66D;">Divider</span><span style="color:#A9B7C6;">(</span></div>
<div class="t" style="left:117.00px;top:320.49px;font-family:'Liberation Mono',monospace;font-size:14.5px;transform:scaleX(0.9195);transform-origin:0 0;-webkit-text-stroke-width:0.3px"><span style="color:#A9B7C6;">height: </span><span style="color:#6897BB;">0.2</span><span style="color:#CC7832;">,</span></div>
<div class="t" style="left:101.00px;top:341.49px;font-family:'Liberation Mono',monospace;font-size:14.5px;transform:scaleX(0.9195);transform-origin:0 0;-webkit-text-stroke-width:0.3px"><span style="color:#A9B7C6;">)</span><span style="color:#CC7832;">,</span><span style="color:#808080;">  // Divider</span></div>
<div class="t" style="left:101.00px;top:362.49px;font-family:'Liberation Mono',monospace;font-size:14.5px;transform:scaleX(0.9195);transform-origin:0 0;-webkit-text-stroke-width:0.3px"><span style="color:#FFC66D;">ListTile</span><span style="color:#A9B7C6;">(</span></div>
<div class="t" style="left:117.00px;top:383.49px;font-family:'Liberation Mono',monospace;font-size:14.5px;transform:scaleX(0.9195);transform-origin:0 0;-webkit-text-stroke-width:0.3px"><span style="color:#A9B7C6;">title:  </span><span style="color:#FFC66D;">Text</span><span style="color:#A9B7C6;">(</span><span style="color:#6A8759;">"Hunger Feast"</span><span style="color:#A9B7C6;">)</span><span style="color:#CC7832;">,</span></div>
<div class="t" style="left:101.00px;top:425.49px;font-family:'Liberation Mono',monospace;font-size:14.5px;transform:scaleX(0.9195);transform-origin:0 0;-webkit-text-stroke-width:0.3px"><span style="color:#A9B7C6;">)</span><span style="color:#CC7832;">,</span><span style="color:#808080;">  // ListTile</span></div>
<div class="t" style="left:101.00px;top:446.49px;font-family:'Liberation Mono',monospace;font-size:14.5px;transform:scaleX(0.9195);transform-origin:0 0;-webkit-text-stroke-width:0.3px"><span style="color:#FFC66D;">ListTile</span><span style="color:#A9B7C6;">(</span></div>
<div class="t" style="left:117.00px;top:467.49px;font-family:'Liberation Mono',monospace;font-size:14.5px;transform:scaleX(0.9195);transform-origin:0 0;-webkit-text-stroke-width:0.3px"><span style="color:#A9B7C6;">title: </span><span style="color:#FFC66D;">Text</span><span style="color:#A9B7C6;">(</span><span style="color:#6A8759;">"Fashion Expert"</span><span style="color:#A9B7C6;">)</span><span style="color:#CC7832;">,</span></div>
<div class="t" style="left:101.00px;top:488.49px;font-family:'Liberation Mono',monospace;font-size:14.5px;transform:scaleX(0.9195);transform-origin:0 0;-webkit-text-stroke-width:0.3px"><span style="color:#A9B7C6;">)</span><span style="color:#CC7832;">,</span><span style="color:#808080;">  // ListTile</span></div>
<div class="t" style="left:101.00px;top:509.49px;font-family:'Liberation Mono',monospace;font-size:14.5px;transform:scaleX(0.9195);transform-origin:0 0;-webkit-text-stroke-width:0.3px"><span style="color:#FFC66D;">ListTile</span><span style="color:#A9B7C6;">(</span></div>
<div class="t" style="left:117.00px;top:530.49px;font-family:'Liberation Mono',monospace;font-size:14.5px;transform:scaleX(0.9195);transform-origin:0 0;-webkit-text-stroke-width:0.3px"><span style="color:#A9B7C6;">title:  </span><span style="color:#FFC66D;">Text</span><span style="color:#A9B7C6;">(</span><span style="color:#6A8759;">"Home Filler"</span><span style="color:#A9B7C6;">)</span><span style="color:#CC7832;">,</span></div>
<div class="t" style="left:101.00px;top:551.49px;font-family:'Liberation Mono',monospace;font-size:14.5px;transform:scaleX(0.9195);transform-origin:0 0;-webkit-text-stroke-width:0.3px"><span style="color:#A9B7C6;">)</span><span style="color:#CC7832;">,</span><span style="color:#808080;">  // ListTile</span></div>
</div>
<div class="t" style="left:464px;top:84.94px;font-family:'Liberation Mono',monospace;font-size:13px;color:#606366;transform:scaleX(0.88);transform-origin:0 0;-webkit-text-stroke-width:0.2px">236</div>
<div class="t" style="left:464px;top:105.94px;font-family:'Liberation Mono',monospace;font-size:13px;color:#606366;transform:scaleX(0.88);transform-origin:0 0;-webkit-text-stroke-width:0.2px">237</div>
<div class="t" style="left:464px;top:126.94px;font-family:'Liberation Mono',monospace;font-size:13px;color:#606366;transform:scaleX(0.88);transform-origin:0 0;-webkit-text-stroke-width:0.2px">238</div>
<div class="t" style="left:464px;top:147.94px;font-family:'Liberation Mono',monospace;font-size:13px;color:#606366;transform:scaleX(0.88);transform-origin:0 0;-webkit-text-stroke-width:0.2px">239</div>
<div class="t" style="left:464px;top:168.94px;font-family:'Liberation Mono',monospace;font-size:13px;color:#606366;transform:scaleX(0.88);transform-origin:0 0;-webkit-text-stroke-width:0.2px">240</div>
<div class="t" style="left:464px;top:189.94px;font-family:'Liberation Mono',monospace;font-size:13px;color:#606366;transform:scaleX(0.88);transform-origin:0 0;-webkit-text-stroke-width:0.2px">241</div>
<div class="t" style="left:464px;top:210.94px;font-family:'Liberation Mono',monospace;font-size:13px;color:#606366;transform:scaleX(0.88);transform-origin:0 0;-webkit-text-stroke-width:0.2px">242</div>
<div class="t" style="left:464px;top:231.94px;font-family:'Liberation Mono',monospace;font-size:13px;color:#606366;transform:scaleX(0.88);transform-origin:0 0;-webkit-text-stroke-width:0.2px">243</div>
<div class="t" style="left:464px;top:252.94px;font-family:'Liberation Mono',monospace;font-size:13px;color:#606366;transform:scaleX(0.88);transform-origin:0 0;-webkit-text-stroke-width:0.2px">244</div>
<div class="t" style="left:464px;top:273.94px;font-family:'Liberation Mono',monospace;font-size:13px;color:#606366;transform:scaleX(0.88);transform-origin:0 0;-webkit-text-stroke-width:0.2px">245</div>
<div class="t" style="left:464px;top:294.94px;font-family:'Liberation Mono',monospace;font-size:13px;color:#606366;transform:scaleX(0.88);transform-origin:0 0;-webkit-text-stroke-width:0.2px">246</div>
<div class="t" style="left:464px;top:315.94px;font-family:'Liberation Mono',monospace;font-size:13px;color:#606366;transform:scaleX(0.88);transform-origin:0 0;-webkit-text-stroke-width:0.2px">247</div>
<div class="t" style="left:464px;top:336.94px;font-family:'Liberation Mono',monospace;font-size:13px;color:#606366;transform:scaleX(0.88);transform-origin:0 0;-webkit-text-stroke-width:0.2px">248</div>
<div class="t" style="left:464px;top:357.94px;font-family:'Liberation Mono',monospace;font-size:13px;color:#606366;transform:scaleX(0.88);transform-origin:0 0;-webkit-text-stroke-width:0.2px">249</div>
<div class="t" style="left:464px;top:378.94px;font-family:'Liberation Mono',monospace;font-size:13px;color:#606366;transform:scaleX(0.88);transform-origin:0 0;-webkit-text-stroke-width:0.2px">250</div>
<div class="t" style="left:464px;top:399.94px;font-family:'Liberation Mono',monospace;font-size:13px;color:#606366;transform:scaleX(0.88);transform-origin:0 0;-webkit-text-stroke-width:0.2px">251</div>
<div class="t" style="left:464px;top:420.94px;font-family:'Liberation Mono',monospace;font-size:13px;color:#606366;transform:scaleX(0.88);transform-origin:0 0;-webkit-text-stroke-width:0.2px">252</div>
<div class="t" style="left:464px;top:441.94px;font-family:'Liberation Mono',monospace;font-size:13px;color:#606366;transform:scaleX(0.88);transform-origin:0 0;-webkit-text-stroke-width:0.2px">253</div>
<div class="t" style="left:464px;top:462.94px;font-family:'Liberation Mono',monospace;font-size:13px;color:#606366;transform:scaleX(0.88);transform-origin:0 0;-webkit-text-stroke-width:0.2px">254</div>
<div class="t" style="left:464px;top:483.94px;font-family:'Liberation Mono',monospace;font-size:13px;color:#606366;transform:scaleX(0.88);transform-origin:0 0;-webkit-text-stroke-width:0.2px">255</div>
<div class="t" style="left:464px;top:504.94px;font-family:'Liberation Mono',monospace;font-size:13px;color:#606366;transform:scaleX(0.88);transform-origin:0 0;-webkit-text-stroke-width:0.2px">256</div>
<div class="t" style="left:464px;top:525.94px;font-family:'Liberation Mono',monospace;font-size:13px;color:#606366;transform:scaleX(0.88);transform-origin:0 0;-webkit-text-stroke-width:0.2px">257</div>
<div class="t" style="left:464px;top:546.94px;font-family:'Liberation Mono',monospace;font-size:13px;color:#606366;transform:scaleX(0.88);transform-origin:0 0;-webkit-text-stroke-width:0.2px">258</div>
<div class="t" style="left:464px;top:567.94px;font-family:'Liberation Mono',monospace;font-size:13px;color:#606366;transform:scaleX(0.88);transform-origin:0 0;-webkit-text-stroke-width:0.2px">259</div>
<div class="t" style="left:464px;top:588.94px;font-family:'Liberation Mono',monospace;font-size:13px;color:#606366;transform:scaleX(0.88);transform-origin:0 0;-webkit-text-stroke-width:0.2px">260</div>
<div class="t" style="left:464px;top:609.94px;font-family:'Liberation Mono',monospace;font-size:13px;color:#606366;transform:scaleX(0.88);transform-origin:0 0;-webkit-text-stroke-width:0.2px">261</div>
<div class="t" style="left:464px;top:630.94px;font-family:'Liberation Mono',monospace;font-size:13px;color:#606366;transform:scaleX(0.88);transform-origin:0 0;-webkit-text-stroke-width:0.2px">262</div>
<div class="a" style="left:523px;top:79px;width:1px;height:566px;background:#5A5B5C;"></div>
<svg style="left:519px;top:108px" width="9" height="11" viewBox="0 0 9 11"><path d="M0.5 0.5 H8.5 V7 L4.5 10.5 L0.5 7 Z" fill="#313335" stroke="#5E5F60" stroke-width="1"/><rect x="2" y="4" width="5" height="1" fill="#5E5F60"/></svg>
<svg style="left:519px;top:234px" width="9" height="11" viewBox="0 0 9 11"><path d="M0.5 0.5 H8.5 V7 L4.5 10.5 L0.5 7 Z" fill="#313335" stroke="#5E5F60" stroke-width="1"/><rect x="2" y="4" width="5" height="1" fill="#5E5F60"/></svg>
<svg style="left:519px;top:297px" width="9" height="11" viewBox="0 0 9 11"><path d="M0.5 0.5 H8.5 V7 L4.5 10.5 L0.5 7 Z" fill="#313335" stroke="#5E5F60" stroke-width="1"/><rect x="2" y="4" width="5" height="1" fill="#5E5F60"/></svg>
<svg style="left:519px;top:381px" width="9" height="11" viewBox="0 0 9 11"><path d="M0.5 0.5 H8.5 V7 L4.5 10.5 L0.5 7 Z" fill="#313335" stroke="#5E5F60" stroke-width="1"/><rect x="2" y="4" width="5" height="1" fill="#5E5F60"/></svg>
<svg style="left:519px;top:444px" width="9" height="11" viewBox="0 0 9 11"><path d="M0.5 0.5 H8.5 V7 L4.5 10.5 L0.5 7 Z" fill="#313335" stroke="#5E5F60" stroke-width="1"/><rect x="2" y="4" width="5" height="1" fill="#5E5F60"/></svg>
<svg style="left:519px;top:528px" width="9" height="11" viewBox="0 0 9 11"><path d="M0.5 0.5 H8.5 V7 L4.5 10.5 L0.5 7 Z" fill="#313335" stroke="#5E5F60" stroke-width="1"/><rect x="2" y="4" width="5" height="1" fill="#5E5F60"/></svg>
<svg style="left:519px;top:591px" width="9" height="11" viewBox="0 0 9 11"><path d="M0.5 0.5 H8.5 V7 L4.5 10.5 L0.5 7 Z" fill="#313335" stroke="#5E5F60" stroke-width="1"/><rect x="2" y="4" width="5" height="1" fill="#5E5F60"/></svg>
<svg style="left:519px;top:169px" width="9" height="11" viewBox="0 0 9 11"><path d="M0.5 10.5 H8.5 V4 L4.5 0.5 L0.5 4 Z" fill="#313335" stroke="#5E5F60" stroke-width="1"/><rect x="2" y="6" width="5" height="1" fill="#5E5F60"/></svg>
<svg style="left:519px;top:190px" width="9" height="11" viewBox="0 0 9 11"><path d="M0.5 10.5 H8.5 V4 L4.5 0.5 L0.5 4 Z" fill="#313335" stroke="#5E5F60" stroke-width="1"/><rect x="2" y="6" width="5" height="1" fill="#5E5F60"/></svg>
<svg style="left:519px;top:211px" width="9" height="11" viewBox="0 0 9 11"><path d="M0.5 10.5 H8.5 V4 L4.5 0.5 L0.5 4 Z" fill="#313335" stroke="#5E5F60" stroke-width="1"/><rect x="2" y="6" width="5" height="1" fill="#5E5F60"/></svg>
<svg style="left:519px;top:274px" width="9" height="11" viewBox="0 0 9 11"><path d="M0.5 10.5 H8.5 V4 L4.5 0.5 L0.5 4 Z" fill="#313335" stroke="#5E5F60" stroke-width="1"/><rect x="2" y="6" width="5" height="1" fill="#5E5F60"/></svg>
<svg style="left:519px;top:358px" width="9" height="11" viewBox="0 0 9 11"><path d="M0.5 10.5 H8.5 V4 L4.5 0.5 L0.5 4 Z" fill="#313335" stroke="#5E5F60" stroke-width="1"/><rect x="2" y="6" width="5" height="1" fill="#5E5F60"/></svg>
<svg style="left:519px;top:421px" width="9" height="11" viewBox="0 0 9 11"><path d="M0.5 10.5 H8.5 V4 L4.5 0.5 L0.5 4 Z" fill="#313335" stroke="#5E5F60" stroke-width="1"/><rect x="2" y="6" width="5" height="1" fill="#5E5F60"/></svg>
<svg style="left:519px;top:505px" width="9" height="11" viewBox="0 0 9 11"><path d="M0.5 10.5 H8.5 V4 L4.5 0.5 L0.5 4 Z" fill="#313335" stroke="#5E5F60" stroke-width="1"/><rect x="2" y="6" width="5" height="1" fill="#5E5F60"/></svg>
<svg style="left:519px;top:568px" width="9" height="11" viewBox="0 0 9 11"><path d="M0.5 10.5 H8.5 V4 L4.5 0.5 L0.5 4 Z" fill="#313335" stroke="#5E5F60" stroke-width="1"/><rect x="2" y="6" width="5" height="1" fill="#5E5F60"/></svg>
<svg style="left:519px;top:631px" width="9" height="11" viewBox="0 0 9 11"><path d="M0.5 10.5 H8.5 V4 L4.5 0.5 L0.5 4 Z" fill="#313335" stroke="#5E5F60" stroke-width="1"/><rect x="2" y="6" width="5" height="1" fill="#5E5F60"/></svg>
<div class="a" style="left:493px;top:126px;width:12px;height:12px;background:#4CAF50;"></div>
<svg style="left:492px;top:334px" width="16" height="16" viewBox="0 0 24 24"><path fill="#AFB1B3" d="M12 22c1.1 0 2-.9 2-2h-4c0 1.1.89 2 2 2zm6-6v-5c0-3.07-1.64-5.64-4.5-6.32V4c0-.83-.67-1.5-1.5-1.5s-1.5.67-1.5 1.5v.68C7.63 5.36 6 7.92 6 11v5l-2 2v1h16v-1l-2-2z"/></svg>
<svg style="left:1257px;top:86px" width="12" height="11" viewBox="0 0 12 11"><path d="M6 0 L12 11 H0 Z" fill="#857B5D"/><rect x="5.2" y="3.5" width="1.6" height="4" fill="#2B2B2B"/><rect x="5.2" y="8.3" width="1.6" height="1.6" fill="#2B2B2B"/></svg>
<div class="t" style="left:1271.00px;top:86.34px;font-size:12px;color:#A9A9A9;">7</div>
<svg style="left:1286px;top:86px" width="12" height="13" viewBox="0 0 12 13"><path d="M0.8 4.5 L4 8 L11 0.8" fill="none" stroke="#499C54" stroke-width="2"/><path d="M0 12 L2 10 L4 12 L6 10 L8 12 L10 10 L12 12" fill="none" stroke="#499C54" stroke-width="0.9"/></svg>
<div class="t" style="left:1300.00px;top:86.34px;font-size:12px;color:#A9A9A9;">1</div>
<svg style="left:1316px;top:89px" width="9" height="5" viewBox="0 0 9 5"><path d="M0.5 4.5 L4.5 0.7 L8.5 4.5" fill="none" stroke="#AFB1B3" stroke-width="1.2"/></svg>
<svg style="left:1337px;top:90px" width="9" height="5" viewBox="0 0 9 5"><path d="M0.5 0.5 L4.5 4.3 L8.5 0.5" fill="none" stroke="#AFB1B3" stroke-width="1.2"/></svg>
<div class="a" style="left:1340px;top:140px;width:13px;height:2px;background:#857B5D;"></div>
<div class="a" style="left:1340px;top:240px;width:13px;height:2px;background:#857B5D;"></div>
<div class="a" style="left:1340px;top:275px;width:13px;height:2px;background:#857B5D;"></div>
<div class="a" style="left:1340px;top:290px;width:13px;height:13px;background:#857B5D;"></div>
<div class="a" style="left:1344px;top:371px;width:7px;height:187px;background:#4A4C4E;border-radius:4px"></div>
<div class="t" style="left:23.30px;top:652.80px;font-size:13px;color:#BBBBBB;transform:scaleX(1.0014);transform-origin:0 0;">Run:</div>
<svg style="left:73px;top:651px" width="11" height="16" viewBox="0 0 12 17"><path d="M7 0 H11.5 L3.3 8.2 L1 5.9 Z" fill="#3D9CC2"/><path d="M7.2 7.6 H11.6 L7.3 11.9 L11.6 16.2 H7.2 L3 12 Z" fill="#3D9CC2"/><path d="M5.1 9.9 L7.3 12 L11.6 16.2 H7.2 Z" fill="#1F5F92"/></svg>
<div class="t" style="left:90.50px;top:652.80px;font-size:13px;color:#BBBBBB;transform:scaleX(1.0518);transform-origin:0 0;">main.dart</div>
<svg style="left:155px;top:656px" width="8" height="8" viewBox="0 0 8 8"><path d="M0.5 0.5 L7.5 7.5 M7.5 0.5 L0.5 7.5" stroke="#6E6E6E" stroke-width="1"/></svg>
<div class="a" style="left:58px;top:669px;width:116px;height:3px;background:#747A80;"></div>
<svg style="left:1306px;top:651px" width="16" height="16" viewBox="0 0 24 24"><path fill="#AFB1B3" d="M19.14,12.94c0.04-0.3,0.06-0.61,0.06-0.94c0-0.32-0.02-0.64-0.07-0.94l2.03-1.58c0.18-0.14,0.23-0.41,0.12-0.61l-1.92-3.32c-0.12-0.22-0.37-0.29-0.59-0.22l-2.39,0.96c-0.5-0.38-1.03-0.7-1.62-0.94L14.4,2.81c-0.04-0.24-0.24-0.41-0.48-0.41h-3.84c-0.24,0-0.43,0.17-0.47,0.41L9.25,5.35C8.66,5.59,8.12,5.92,7.63,6.29L5.24,5.33c-0.22-0.08-0.47,0-0.59,0.22L2.74,8.87C2.62,9.08,2.66,9.34,2.86,9.48l2.03,1.58C4.84,11.36,4.8,11.69,4.8,12s0.02,0.64,0.07,0.94l-2.03,1.58c-0.18,0.14-0.23,0.41-0.12,0.61l1.92,3.32c0.12,0.22,0.37,0.29,0.59,0.22l2.39-0.96c0.5,0.38,1.03,0.7,1.62,0.94l0.36,2.54c0.05,0.24,0.24,0.41,0.48,0.41h3.84c0.24,0,0.44-0.17,0.47-0.41l0.36-2.54c0.59-0.24,1.13-0.56,1.62-0.94l2.39,0.96c0.22,0.08,0.47,0,0.59-0.22l1.92-3.32c0.12-0.22,0.07-0.47-0.12-0.61L19.14,12.94z M12,15.6c-1.98,0-3.6-1.62-3.6-3.6s1.62-3.6,3.6-3.6s3.6,1.62,3.6,3.6S13.98,15.6,12,15.6z"/></svg>
<div class="a" style="left:1334px;top:658px;width:13px;height:1.6px;background:#AFB1B3;"></div>
<div class="a" style="left:26px;top:682px;width:10px;height:10px;background:#C75450;"></div>
<svg style="left:23px;top:706px" width="15" height="15" viewBox="0 0 15 15"><path d="M9 0.5 L14.5 6 L12.5 6.5 L9.5 9.5 L9.5 12 L3 5.5 L5.5 5.5 L8.5 2.5 Z" fill="#AFB1B3"/><path d="M6 9 L0.8 14.2" stroke="#AFB1B3" stroke-width="1.5"/></svg>
<svg style="left:60px;top:682px" width="12" height="10" viewBox="0 0 12 10"><rect x="0" y="0" width="12" height="10" fill="#AFB1B3"/><path d="M3.5 2.5 L6.5 5 L3.5 7.5" fill="none" stroke="#3C3F41" stroke-width="1.5"/></svg>
<div class="t" style="left:78.00px;top:681.22px;font-size:12.5px;color:#BBBBBB;transform:scaleX(0.9485);transform-origin:0 0;">Console</div>
<svg style="left:137px;top:678px" width="10" height="16" viewBox="0 0 10 16"><path d="M5 0 L0.5 9 H4.5 L3.5 16 L9.5 6 H5.5 L6.5 0 Z" fill="#F4AF3D"/></svg>
<svg style="left:161px;top:680px" width="15" height="15" viewBox="0 0 15 15"><path d="M2 8 V4.5 Q2 2 4.5 2 H10.5 Q13 2 13 4.5 V7" fill="none" stroke="#3FB34F" stroke-width="1.8"/><path d="M0 6 L2 8.5 L4 6" fill="none" stroke="#3FB34F" stroke-width="1.6"/><path d="M2 8.5 Q2 11 4.5 11 H7" fill="none" stroke="#3FB34F" stroke-width="1.8"/><path d="M11.5 6.5 L8.5 11 H10.8 L10 15 L14 9.5 H11.8 L12.5 6.5 Z" fill="#F4AF3D"/></svg>
<div class="a" style="left:184px;top:676px;width:1px;height:20px;background:#4B4D4F;"></div>
<svg style="left:194px;top:679px" width="14" height="14" viewBox="0 0 14 14"><path d="M3 0.5 L9.5 0 L13.5 4 L14 10 L10 14 L3.5 13.5 L0 10 L0 3.5 Z" fill="#4A77C0"/><path d="M3 0.5 L13 10.5 L14 10 L10 14 L3.5 13.5 L0 10 L0 3.5 Z" fill="#61B3EE"/><path d="M3 0.5 L9.5 0 L13.5 4 L14 10 Z" fill="#3E6AAE"/></svg>
<svg style="left:1336px;top:680px" width="15" height="15" viewBox="0 0 15 15"><rect x="0" y="0" width="6" height="5" fill="#AFB1B3"/><rect x="7" y="0" width="6" height="5" fill="#AFB1B3"/><rect x="0" y="6" width="13" height="4" fill="#AFB1B3"/><path d="M10 12 H15 L12.5 14.5 Z" fill="#AFB1B3"/></svg>
<svg style="left:55px;top:710px" width="10" height="12" viewBox="0 0 10 12"><path d="M5 1 V12 M1 5 L5 1 L9 5" fill="none" stroke="#5E6060" stroke-width="1.5"/></svg>
<svg style="left:55px;top:736px" width="10" height="12" viewBox="0 0 10 12"><path d="M5 0 V11 M1 7 L5 11 L9 7" fill="none" stroke="#5E6060" stroke-width="1.5"/></svg>
<svg style="left:53px;top:761px" width="14" height="14" viewBox="0 0 14 14"><rect x="0" y="0.5" width="13" height="1.5" fill="#AFB1B3"/><rect x="0" y="5" width="13" height="1.5" fill="#AFB1B3"/><path d="M12.5 5.8 Q14 9.5 10 10 H7" fill="none" stroke="#AFB1B3" stroke-width="1.5"/><path d="M8.5 7.5 L6 10 L8.5 12.5" fill="none" stroke="#AFB1B3" stroke-width="1.5"/><rect x="0" y="9.5" width="3" height="1.5" fill="#AFB1B3"/></svg>
<div class="a" style="left:49px;top:782px;width:21px;height:21px;background:#4C5052;border-radius:3px"></div>
<svg style="left:53px;top:786px" width="14" height="13" viewBox="0 0 14 13"><rect x="0" y="1" width="5" height="1.5" fill="#AFB1B3"/><rect x="0" y="5" width="5" height="1.5" fill="#AFB1B3"/><rect x="0" y="11" width="13" height="1.6" fill="#AFB1B3"/><path d="M9 0 V8 M6 5.5 L9 8.5 L12 5.5" fill="none" stroke="#AFB1B3" stroke-width="1.5"/></svg>
<svg style="left:53px;top:813px" width="14" height="14" viewBox="0 0 14 14"><rect x="3" y="0" width="8" height="3" fill="#AFB1B3"/><rect x="0" y="3.5" width="14" height="6" rx="1" fill="#AFB1B3"/><rect x="3" y="8" width="8" height="6" fill="#3C3F41" stroke="#AFB1B3" stroke-width="1.4"/></svg>
<svg style="left:54px;top:838px" width="12" height="14" viewBox="0 0 12 14"><rect x="0" y="1.5" width="12" height="2" fill="#AFB1B3"/><rect x="4" y="0" width="4" height="2" fill="#AFB1B3"/><path d="M1.2 4.5 H10.8 L10 14 H2 Z" fill="#AFB1B3"/></svg>
<div class="t" style="left:87px;top:705.09px;font-family:'Liberation Mono',monospace;font-size:14.5px;color:#BBBBBB;transform:scaleX(0.9195);transform-origin:0 0;-webkit-text-stroke-width:0.3px">Performing hot reload...</div>
<div class="t" style="left:87px;top:726.09px;font-family:'Liberation Mono',monospace;font-size:14.5px;color:#BBBBBB;transform:scaleX(0.9195);transform-origin:0 0;-webkit-text-stroke-width:0.3px">Syncing files to device sdk gphone x86...</div>
<div class="t" style="left:87px;top:747.09px;font-family:'Liberation Mono',monospace;font-size:14.5px;color:#BBBBBB;transform:scaleX(0.9195);transform-origin:0 0;-webkit-text-stroke-width:0.3px">Reloaded 1 of 558 libraries in 1,066ms.</div>
<svg style="left:28px;top:942px" width="11" height="11" viewBox="0 0 11 11"><rect x="0" y="0.5" width="2" height="2" fill="#AFB1B3"/><rect x="3.5" y="0.5" width="7.5" height="2" fill="#AFB1B3"/><rect x="0" y="4.5" width="2" height="2" fill="#AFB1B3"/><rect x="3.5" y="4.5" width="7.5" height="2" fill="#AFB1B3"/><rect x="0" y="8.5" width="2" height="2" fill="#AFB1B3"/><rect x="3.5" y="8.5" width="7.5" height="2" fill="#AFB1B3"/></svg>
<div class="t" style="left:43.50px;top:942.42px;font-size:12.5px;color:#BBBBBB;transform:scaleX(0.8639);transform-origin:0 0;">TODO</div>
<svg style="left:98px;top:942px" width="11" height="11" viewBox="0 0 11 11"><circle cx="5.5" cy="5.5" r="5.5" fill="#AFB1B3"/><rect x="4.6" y="2" width="1.8" height="4.5" fill="#3C3F41"/><rect x="4.6" y="7.5" width="1.8" height="1.8" fill="#3C3F41"/></svg>
<div class="t" style="left:114.50px;top:942.42px;font-size:12.5px;color:#BBBBBB;transform:scaleX(0.9091);transform-origin:0 0;">Problems</div>
<svg style="left:186px;top:942px" width="11" height="11" viewBox="0 0 11 11"><rect x="0" y="0" width="11" height="11" fill="#AFB1B3"/><path d="M2 2.5 L5 5 L2 7.5" fill="none" stroke="#3C3F41" stroke-width="1.3"/><rect x="5" y="8" width="4.5" height="1.3" fill="#3C3F41"/></svg>
<div class="t" style="left:202.50px;top:942.42px;font-size:12.5px;color:#BBBBBB;transform:scaleX(0.9103);transform-origin:0 0;">Terminal</div>
<svg style="left:267px;top:941px" width="16" height="14" viewBox="0 0 16 14"><path d="M7 0 L14 3 L15 9 L9 13 L4 10 L3 4 Z" fill="#AFB1B3"/><path d="M5 3 L13 11" stroke="#3C3F41" stroke-width="1.2"/><circle cx="3.5" cy="10.5" r="3.2" fill="#DB3B3B"/></svg>
<div class="t" style="left:285.50px;top:942.42px;font-size:12.5px;color:#BBBBBB;transform:scaleX(0.9322);transform-origin:0 0;">Dart Analysis</div>
<div class="a" style="left:364px;top:937px;width:54px;height:21px;background:#2F3133;"></div>
<svg style="left:375px;top:942px" width="9" height="11" viewBox="0 0 9 11"><path d="M0 0 L9 5.5 L0 11 Z" fill="#AFB1B3"/></svg>
<div class="t" style="left:390.50px;top:942.42px;font-size:12.5px;color:#E8E8E8;font-weight:bold;transform:scaleX(0.8231);transform-origin:0 0;">Run</div>
<svg style="left:1275px;top:942px" width="13" height="13" viewBox="0 0 13 13"><path d="M6.5 0 A6.5 6.5 0 1 0 6.5 13 H13 V6.5 A6.5 6.5 0 0 0 6.5 0 Z" fill="#E5A11C"/><text x="6.3" y="10.5" text-anchor="middle" font-family="Liberation Sans" font-weight="bold" font-size="10" fill="#2B2B2B">1</text></svg>
<div class="t" style="left:1292.50px;top:942.42px;font-size:12.5px;color:#BBBBBB;transform:scaleX(0.9060);transform-origin:0 0;">Event Log</div>
<div class="a" style="left:3px;top:963px;width:11px;height:9px;border:1.3px solid #AFB1B3"></div>
<div class="t" style="left:27.00px;top:964.42px;font-size:12.5px;color:#BBBBBB;transform:scaleX(0.8049);transform-origin:0 0;">Performance with ... hot reload took ...</div>
<div class="t" style="left:1126.00px;top:964.42px;font-size:12.5px;color:#BBBBBB;transform:scaleX(0.8245);transform-origin:0 0;">262:30   LF   UTF-8   2 sp</div>
<div class="a" style="left:1301px;top:963px;width:7px;height:7px;border:1.3px solid #AFB1B3;border-radius:50%"></div>
<div class="a" style="left:1326px;top:962px;width:14px;height:14px;background:#AFB1B3;border-radius:50%"></div>
<div class="a" style="left:1350px;top:962px;width:14px;height:14px;background:#AFB1B3;border-radius:50%"></div>
</div>

<!-- desktop right -->
<div class="a" style="left:1375px;top:0;width:495px;height:967px;background:#000"></div>
<div class="a" style="left:1375px;top:3px;width:495px;height:1px;background:#4A4A4A"></div>
<div class="a" style="left:1830px;top:45px;width:40px;height:28px;background:#3A3A3A"></div>
<div class="a" style="left:1851px;top:54px;width:18px;height:18px;border-radius:50%;background:#5B3AB0"></div>
<div class="a" style="left:1856px;top:73px;width:14px;height:515px;background:#000"></div>
<div class="a" style="left:1857px;top:73px;width:13px;height:513px;background:#EFEFEF"></div>
<div class="a" style="left:1830px;top:587px;width:40px;height:196px;background:#DAD7D6"></div>
<div class="a" style="left:1830px;top:783px;width:40px;height:184px;background:#E3E3E3"></div>
<div class="a" style="left:1375px;top:900px;width:495px;height:67px;background:#E4E4E4"></div>
<div class="a" style="left:1375px;top:900px;width:45px;height:67px;background:#C9C5C3"></div>
<div class="a" style="left:1420px;top:900px;width:11px;height:67px;background:#DEDEDE"></div>
<div class="a" style="left:1431px;top:900px;width:126px;height:67px;background:#C0BDBB"></div>
<!-- emulator window -->
<div class="a" style="left:1370px;top:45px;width:486px;height:891px;border-radius:10px;overflow:hidden;box-shadow:0 4px 12px rgba(0,0,0,0.22);will-change:transform">
  <div class="a" style="left:0;top:0;width:486px;height:28px;background:#FFFFFF;border-radius:10px 10px 0 0"></div>
  
  <div class="a" style="left:0;top:28px;width:486px;height:1px;background:#A0A0A0"></div>
  <div class="a" style="left:0;top:29px;width:359px;height:27px;background:#BDBDBD"></div>
  <div class="a" style="left:359px;top:29px;width:127px;height:27px;background:#5A4505"></div>
  <div class="a" style="left:0;top:56px;width:359px;height:191px;background:#69FFDA"></div>
  <div class="a" style="left:0;top:247px;width:359px;height:588px;background:#FAFAFA"></div>
  <div class="a" style="left:359px;top:56px;width:127px;height:66px;background:#735A05"></div>
  <div class="a" style="left:359px;top:122px;width:127px;height:713px;background:#737373"></div>
  <div class="a" style="left:359px;top:122px;width:127px;height:6px;background:linear-gradient(#5a5a5a,#737373)"></div>
  <div class="a" style="left:0;top:835px;width:486px;height:56px;background:#000;border-radius:0 0 10px 10px"></div>

<div class="t" style="left:108.80px;top:6.77px;font-size:13.5px;color:#3F3F3F;font-weight:bold;transform:scaleX(1.0285);transform-origin:0 0;">Android Emulator - Pixel_2_API_30:5554</div>
<div class="t" style="left:10.00px;top:34.98px;font-size:16.8px;color:#555555;transform:scaleX(0.9221);transform-origin:0 0;">1:11</div>
<svg style="left:54px;top:33.5px" width="17.5" height="17.5" viewBox="0 0 24 24"><path fill="#4E4E4E" d="M19.14,12.94c0.04-0.3,0.06-0.61,0.06-0.94c0-0.32-0.02-0.64-0.07-0.94l2.03-1.58c0.18-0.14,0.23-0.41,0.12-0.61l-1.92-3.32c-0.12-0.22-0.37-0.29-0.59-0.22l-2.39,0.96c-0.5-0.38-1.03-0.7-1.62-0.94L14.4,2.81c-0.04-0.24-0.24-0.41-0.48-0.41h-3.84c-0.24,0-0.43,0.17-0.47,0.41L9.25,5.35C8.66,5.59,8.12,5.92,7.63,6.29L5.24,5.33c-0.22-0.08-0.47,0-0.59,0.22L2.74,8.87C2.62,9.08,2.66,9.34,2.86,9.48l2.03,1.58C4.84,11.36,4.8,11.69,4.8,12s0.02,0.64,0.07,0.94l-2.03,1.58c-0.18,0.14-0.23,0.41-0.12,0.61l1.92,3.32c0.12,0.22,0.37,0.29,0.59,0.22l2.39-0.96c0.5,0.38,1.03,0.7,1.62,0.94l0.36,2.54c0.05,0.24,0.24,0.41,0.48,0.41h3.84c0.24,0,0.44-0.17,0.47-0.41l0.36-2.54c0.59-0.24,1.13-0.56,1.62-0.94l2.39,0.96c0.22,0.08,0.47,0,0.59-0.22l1.92-3.32c0.12-0.22,0.07-0.47-0.12-0.61L19.14,12.94z M12,15.6c-1.98,0-3.6-1.62-3.6-3.6s1.62-3.6,3.6-3.6s3.6,1.62,3.6,3.6S13.98,15.6,12,15.6z"/></svg>
<svg style="left:80px;top:33.5px" width="17.5" height="17.5" viewBox="0 0 24 24"><path fill="#4E4E4E" d="M19.14,12.94c0.04-0.3,0.06-0.61,0.06-0.94c0-0.32-0.02-0.64-0.07-0.94l2.03-1.58c0.18-0.14,0.23-0.41,0.12-0.61l-1.92-3.32c-0.12-0.22-0.37-0.29-0.59-0.22l-2.39,0.96c-0.5-0.38-1.03-0.7-1.62-0.94L14.4,2.81c-0.04-0.24-0.24-0.41-0.48-0.41h-3.84c-0.24,0-0.43,0.17-0.47,0.41L9.25,5.35C8.66,5.59,8.12,5.92,7.63,6.29L5.24,5.33c-0.22-0.08-0.47,0-0.59,0.22L2.74,8.87C2.62,9.08,2.66,9.34,2.86,9.48l2.03,1.58C4.84,11.36,4.8,11.69,4.8,12s0.02,0.64,0.07,0.94l-2.03,1.58c-0.18,0.14-0.23,0.41-0.12,0.61l1.92,3.32c0.12,0.22,0.37,0.29,0.59,0.22l2.39-0.96c0.5,0.38,1.03,0.7,1.62,0.94l0.36,2.54c0.05,0.24,0.24,0.41,0.48,0.41h3.84c0.24,0,0.44-0.17,0.47-0.41l0.36-2.54c0.59-0.24,1.13-0.56,1.62-0.94l2.39,0.96c0.22,0.08,0.47,0,0.59-0.22l1.92-3.32c0.12-0.22,0.07-0.47-0.12-0.61L19.14,12.94z M12,15.6c-1.98,0-3.6-1.62-3.6-3.6s1.62-3.6,3.6-3.6s3.6,1.62,3.6,3.6S13.98,15.6,12,15.6z"/></svg>
<svg style="left:106.5px;top:37.5px" width="12" height="12" viewBox="0 0 24 24"><path fill="#4E4E4E" d="M19.14,12.94c0.04-0.3,0.06-0.61,0.06-0.94c0-0.32-0.02-0.64-0.07-0.94l2.03-1.58c0.18-0.14,0.23-0.41,0.12-0.61l-1.92-3.32c-0.12-0.22-0.37-0.29-0.59-0.22l-2.39,0.96c-0.5-0.38-1.03-0.7-1.62-0.94L14.4,2.81c-0.04-0.24-0.24-0.41-0.48-0.41h-3.84c-0.24,0-0.43,0.17-0.47,0.41L9.25,5.35C8.66,5.59,8.12,5.92,7.63,6.29L5.24,5.33c-0.22-0.08-0.47,0-0.59,0.22L2.74,8.87C2.62,9.08,2.66,9.34,2.86,9.48l2.03,1.58C4.84,11.36,4.8,11.69,4.8,12s0.02,0.64,0.07,0.94l-2.03,1.58c-0.18,0.14-0.23,0.41-0.12,0.61l1.92,3.32c0.12,0.22,0.37,0.29,0.59,0.22l2.39-0.96c0.5,0.38,1.03,0.7,1.62,0.94l0.36,2.54c0.05,0.24,0.24,0.41,0.48,0.41h3.84c0.24,0,0.44-0.17,0.47-0.41l0.36-2.54c0.59-0.24,1.13-0.56,1.62-0.94l2.39,0.96c0.22,0.08,0.47,0,0.59-0.22l1.92-3.32c0.12-0.22,0.07-0.47-0.12-0.61L19.14,12.94z M12,15.6c-1.98,0-3.6-1.62-3.6-3.6s1.62-3.6,3.6-3.6s3.6,1.62,3.6,3.6S13.98,15.6,12,15.6z"/></svg>
<svg style="left:112px;top:33.5px" width="10" height="8" viewBox="0 0 10 8"><path fill="#4E4E4E" d="M0.5 1.5 Q5 -1 9.5 1.5 L5 7.5 Z"/></svg>
<div class="t" style="left:422.00px;top:35.37px;font-size:13.5px;color:#2A2205;transform:scaleX(0.7997);transform-origin:0 0;">LTE</div>
<svg style="left:445px;top:35px" width="14" height="13" viewBox="0 0 14 13"><path d="M14 0 L14 13 L0 13 Z" fill="none" stroke="#2A2205" stroke-width="1"/><path d="M14 0 L14 13 L0 13 L8 5 V13 H0 Z" fill="#2A2205"/></svg>
<div class="a" style="left:467px;top:35px;width:10px;height:14px;background:#2A2205;border-radius:1.5px"></div>
<div class="a" style="left:470px;top:33px;width:4px;height:3px;background:#2A2205;"></div>
<div class="t" style="left:18.50px;top:78.88px;font-size:23.3px;color:#4CAF50;transform:scaleX(1.0170);transform-origin:0 0;-webkit-text-stroke-width:0.5px;">Menu Icons</div>
<div class="t" style="left:18.40px;top:281.56px;font-size:16px;color:#1D1D1D;transform:scaleX(1.0215);transform-origin:0 0;-webkit-text-stroke-width:0.25px;">Features</div>
<svg style="left:18.700000000000045px;top:341px" width="28.4" height="28.4" viewBox="0 0 24 24"><path fill="#8A8A8A" d="M12 22c1.1 0 2-.9 2-2h-4c0 1.1.89 2 2 2zm6-6v-5c0-3.07-1.64-5.64-4.5-6.32V4c0-.83-.67-1.5-1.5-1.5s-1.5.67-1.5 1.5v.68C7.63 5.36 6 7.92 6 11v5l-2 2v1h16v-1l-2-2z"/></svg>
<div class="t" style="left:84.50px;top:347.96px;font-size:16px;color:#1D1D1D;transform:scaleX(1.0473);transform-origin:0 0;-webkit-text-stroke-width:0.25px;">New Offers</div>
<div class="a" style="left:0px;top:388px;width:359px;height:1px;background:#E3E3E3;"></div>
<div class="t" style="left:18.40px;top:413.96px;font-size:16px;color:#1D1D1D;transform:scaleX(1.0264);transform-origin:0 0;-webkit-text-stroke-width:0.25px;">Hunger Feast</div>
<div class="t" style="left:18.40px;top:479.96px;font-size:16px;color:#1D1D1D;transform:scaleX(1.0222);transform-origin:0 0;-webkit-text-stroke-width:0.25px;">Fashion Expert</div>
<div class="t" style="left:18.40px;top:546.26px;font-size:16px;color:#1D1D1D;transform:scaleX(1.0392);transform-origin:0 0;-webkit-text-stroke-width:0.25px;">Home Filler</div>
<svg style="left:93px;top:854px" width="17" height="19" viewBox="0 0 17 19"><path fill="#A3A3A3" d="M17 0 L17 19 L0 9.5 Z" stroke="#A3A3A3" stroke-width="0.5" stroke-linejoin="round"/></svg>
<div class="a" style="left:234.20000000000005px;top:855.2px;width:17.5px;height:17.5px;background:#A3A3A3;border-radius:50%"></div>
<div class="a" style="left:374px;top:855px;width:18px;height:18px;background:#A3A3A3;border-radius:2px"></div>

</div>
</body></html>
